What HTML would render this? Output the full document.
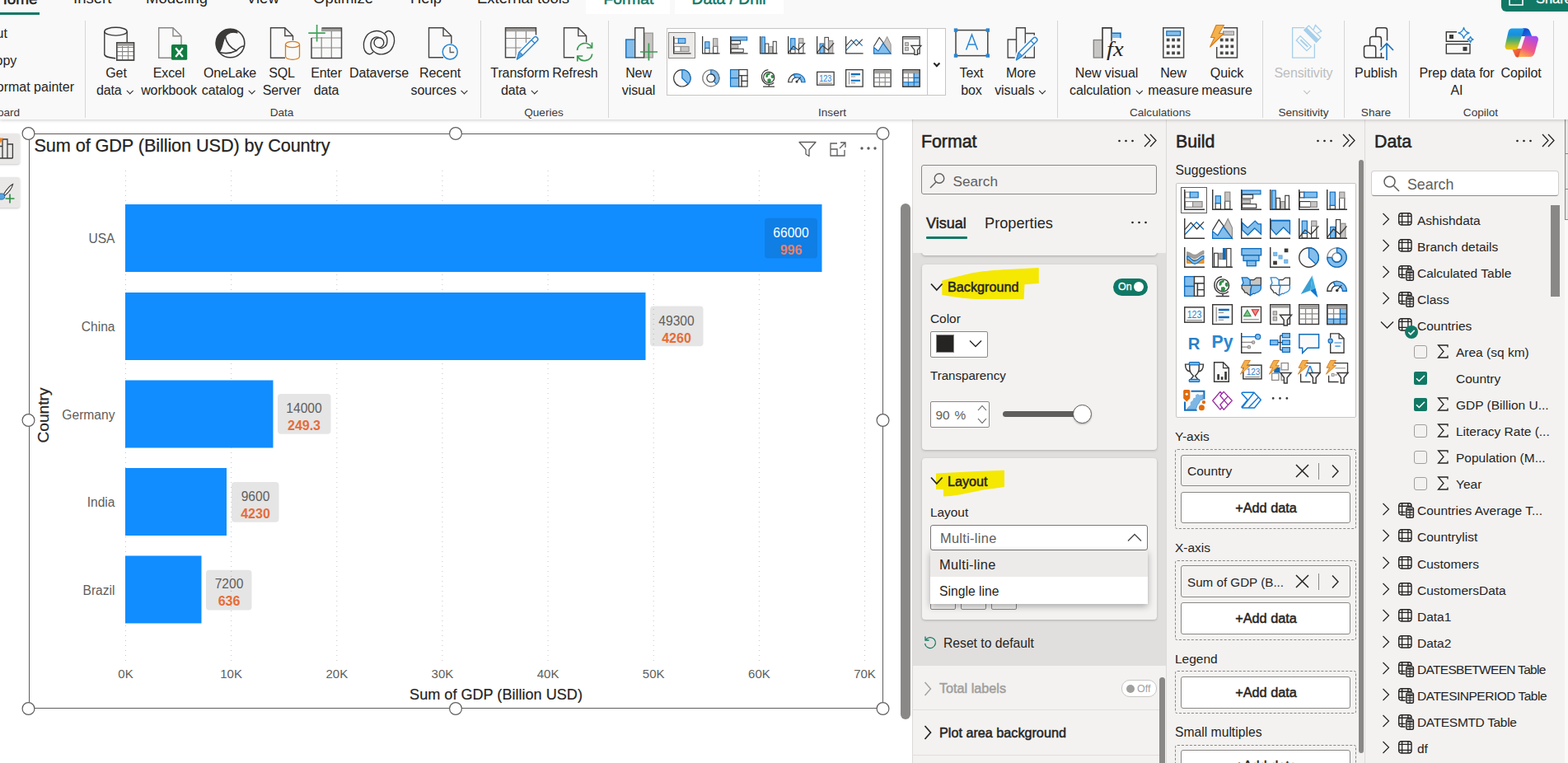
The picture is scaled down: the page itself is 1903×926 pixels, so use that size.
<!DOCTYPE html>
<html lang="en">
<head>
<meta charset="utf-8">
<title>Power BI Desktop</title>
<style>
*{box-sizing:border-box;margin:0;padding:0}
html,body{width:1903px;height:926px;overflow:hidden;background:#fff}
body{position:relative;font-family:"Liberation Sans",Arial,sans-serif;color:#252423;font-size:16px}
.abs{position:absolute}
.t{position:absolute;white-space:nowrap;line-height:1}
.c{transform:translateX(-50%)}
svg{position:absolute;overflow:visible}
#ribbon{z-index:5;position:absolute;left:0;top:0;width:1903px;height:144.500px;background:#f9f9f9;box-shadow:0 1px 4px rgba(0,0,0,.2)}
.sep{position:absolute;top:25px;width:1px;height:118px;background:#d6d6d6}
.rl{position:absolute;white-space:nowrap;line-height:1;font-size:16px;color:#252423;transform:translateX(-50%);letter-spacing:-.1px}
.gl{position:absolute;white-space:nowrap;line-height:1;font-size:13.6px;color:#3b3a39;transform:translateX(-50%);top:130px}
.tab{position:absolute;white-space:nowrap;line-height:1;font-size:18.500px;color:#252423;top:-11px}
.pane{position:absolute;top:144px;height:782px;background:#f3f2f1}
.ph{position:absolute;white-space:nowrap;line-height:1;font-size:21.300px;font-weight:400;color:#252423;top:161.500px;-webkit-text-stroke:.55px #252423}
.sb{font-weight:400;-webkit-text-stroke:.5px currentColor}
.din{font-family:"Liberation Sans",Arial,sans-serif}
.chev{display:inline-block;width:5.5px;height:5.5px;border-right:1.9px solid #252423;border-bottom:1.9px solid #252423;transform:rotate(45deg) translate(-.5px,-3.5px);margin-left:5px;margin-right:1px}
</style>
</head>
<body>
<div id="ribbon">
<!-- tabs -->
<div class="abs" style="left:711px;top:0;width:102px;height:17px;background:#fff"></div>
<div class="abs" style="left:819px;top:0;width:132px;height:17px;background:#fff"></div>
<div class="tab sb" style="left:-5px;font-size:19px">Home</div>
<div class="abs" style="left:0;top:14.600px;width:48px;height:3px;background:#117865"></div>
<div class="tab" style="left:89px">Insert</div>
<div class="tab" style="left:177px">Modeling</div>
<div class="tab" style="left:299px">View</div>
<div class="tab" style="left:380px">Optimize</div>
<div class="tab" style="left:498px">Help</div>
<div class="tab" style="left:579px">External tools</div>
<div class="tab sb" style="left:732.500px;font-size:19.200px;color:#117865">Format</div>
<div class="tab sb" style="left:839.500px;font-size:19.300px;color:#117865">Data / Drill</div>
<!-- share button -->
<div class="abs" style="left:1822px;top:-6px;width:90px;height:20.400px;background:#117865;border-radius:0 0 0 6px"></div>
<div class="t" style="left:1864px;top:-10.500px;font-size:16.400px;color:#fff;-webkit-text-stroke:.3px #fff">Share</div>
<svg style="left:1831px;top:-10px" width="22" height="18" viewBox="0 0 22 18"><path d="M1 3v13h16V9M8 10c1-5 5-7 9-7M13 0l4 3-4 3" fill="none" stroke="#fff" stroke-width="1.6"/></svg>
<!-- separators -->
<div class="sep" style="left:103px"></div>
<div class="sep" style="left:583px"></div>
<div class="sep" style="left:738px"></div>
<div class="sep" style="left:1283px"></div>
<div class="sep" style="left:1532px"></div>
<div class="sep" style="left:1631px"></div>
<div class="sep" style="left:1710px"></div>
<div class="sep" style="left:1885px"></div>
<!-- clipboard fragments -->
<div class="t" style="left:-16px;top:33px;font-size:16px">Cut</div>
<div class="t" style="left:-17px;top:66px;font-size:16px">Copy</div>
<div class="t" style="left:-14px;top:98px;font-size:16px">Format painter</div>
<div class="t" style="left:-34px;top:130px;font-size:13.6px;color:#3b3a39">Clipboard</div>
<!-- labels -->
<div class="rl" style="left:141px;top:81.200px">Get</div>
<div class="rl" style="left:138px;top:102px">data<span class="chev"></span></div>
<div class="rl" style="left:205px;top:81.200px">Excel</div>
<div class="rl" style="left:205px;top:102px">workbook</div>
<div class="rl" style="left:279px;top:81.200px">OneLake</div>
<div class="rl" style="left:276px;top:102px">catalog<span class="chev"></span></div>
<div class="rl" style="left:342px;top:81.200px">SQL</div>
<div class="rl" style="left:342px;top:102px">Server</div>
<div class="rl" style="left:396px;top:81.200px">Enter</div>
<div class="rl" style="left:396px;top:102px">data</div>
<div class="rl" style="left:460px;top:81.200px">Dataverse</div>
<div class="rl" style="left:534px;top:81.200px">Recent</div>
<div class="rl" style="left:532px;top:102px">sources<span class="chev"></span></div>
<div class="rl" style="left:631px;top:81.200px">Transform</div>
<div class="rl" style="left:629px;top:102px">data<span class="chev"></span></div>
<div class="rl" style="left:698px;top:81.200px">Refresh</div>
<div class="rl" style="left:775px;top:81.200px">New</div>
<div class="rl" style="left:775px;top:102px">visual</div>
<div class="rl" style="left:1179px;top:81.200px">Text</div>
<div class="rl" style="left:1179px;top:102px">box</div>
<div class="rl" style="left:1239px;top:81.200px">More</div>
<div class="rl" style="left:1237px;top:102px">visuals<span class="chev"></span></div>
<div class="rl" style="left:1343px;top:81.200px">New visual</div>
<div class="rl" style="left:1341px;top:102px">calculation<span class="chev"></span></div>
<div class="rl" style="left:1424px;top:81.200px">New</div>
<div class="rl" style="left:1424px;top:102px">measure</div>
<div class="rl" style="left:1489px;top:81.200px">Quick</div>
<div class="rl" style="left:1489px;top:102px">measure</div>
<div class="rl" style="left:1582px;top:81.200px;color:#bdbdbd">Sensitivity</div>
<div class="rl" style="left:1582px;top:102px;color:#bdbdbd"><span class="chev" style="border-color:#bdbdbd"></span></div>
<div class="rl" style="left:1670px;top:81.200px">Publish</div>
<div class="rl" style="left:1768px;top:81.200px">Prep data for</div>
<div class="rl" style="left:1768px;top:102px">AI</div>
<div class="rl" style="left:1846px;top:81.200px">Copilot</div>
<!-- group labels -->
<div class="gl" style="left:342px">Data</div>
<div class="gl" style="left:660px">Queries</div>
<div class="gl" style="left:1010px">Insert</div>
<div class="gl" style="left:1408px">Calculations</div>
<div class="gl" style="left:1582px">Sensitivity</div>
<div class="gl" style="left:1670px">Share</div>
<div class="gl" style="left:1797px">Copilot</div>
<!-- gallery -->
<div class="abs" style="left:808.500px;top:34px;width:339px;height:82px;background:#fff;border:1px solid #c8c6c4"></div>
<div class="abs" style="left:1125px;top:34px;width:1px;height:82px;background:#c8c6c4"></div>
<div class="abs" style="left:811px;top:39px;width:33px;height:32px;background:#edebe9;border:1px solid #8a8886"></div>
<span class="chev abs" style="left:1131.500px;top:76.500px;margin:0;border-width:2px"></span>
<!--ICONS-->
<svg style="left:816.9px;top:44.4px" width="21.6" height="21.6" viewBox="0 0 24 24"><rect x="1.4" y="3" width="5.6" height="6.5" fill="#fff" stroke="#8a8886" stroke-width="1.1"/><rect x="7" y="3" width="9.5" height="6.5" fill="#83beec" stroke="#0f6cbd" stroke-width="1.1"/><rect x="1.4" y="14" width="8.8" height="6.5" fill="#fff" stroke="#8a8886" stroke-width="1.1"/><rect x="10.2" y="14" width="11" height="6.5" fill="#c8c6c4" stroke="#8a8886" stroke-width="1.1"/><path d="M.7 0v23.300h23.300" fill="none" stroke="#3b3a39" stroke-width="1.4"/></svg>
<svg style="left:851.9px;top:44.4px" width="21.6" height="21.6" viewBox="0 0 24 24"><rect x="4" y="16" width="6" height="7" fill="#fff" stroke="#3b3a39" stroke-width="1.1"/><rect x="4" y="7.5" width="6" height="8.5" fill="#83beec" stroke="#0f6cbd" stroke-width="1.1"/><rect x="15" y="13.5" width="6" height="9.5" fill="#fff" stroke="#3b3a39" stroke-width="1.1"/><rect x="15" y="3" width="6" height="10.5" fill="#c8c6c4" stroke="#8a8886" stroke-width="1.1"/><path d="M.7 0v23.300h23.300" fill="none" stroke="#3b3a39" stroke-width="1.4"/></svg>
<svg style="left:886.3px;top:44.4px" width="21.6" height="21.6" viewBox="0 0 24 24"><rect x="1.4" y="1" width="21.6" height="4.5" fill="#83beec" stroke="#0f6cbd" stroke-width="1.1"/><rect x="1.4" y="6" width="12.6" height="4.5" fill="#fff" stroke="#3b3a39" stroke-width="1.1"/><rect x="1.4" y="12" width="9.6" height="4" fill="#c8c6c4" stroke="#8a8886" stroke-width="1.1"/><rect x="1.4" y="17" width="16.6" height="4.5" fill="#fff" stroke="#3b3a39" stroke-width="1.1"/><path d="M.7 0v23.300h23.300" fill="none" stroke="#3b3a39" stroke-width="1.4"/></svg>
<svg style="left:921.5px;top:44.4px" width="21.6" height="21.6" viewBox="0 0 24 24"><rect x="2.5" y="1" width="4.5" height="22" fill="#83beec" stroke="#0f6cbd" stroke-width="1.1"/><rect x="7.5" y="10" width="4.5" height="13" fill="#fff" stroke="#3b3a39" stroke-width="1.1"/><rect x="13" y="14" width="4.5" height="9" fill="#c8c6c4" stroke="#8a8886" stroke-width="1.1"/><rect x="18" y="7" width="4.5" height="16" fill="#fff" stroke="#3b3a39" stroke-width="1.1"/><path d="M.7 0v23.300h23.300" fill="none" stroke="#3b3a39" stroke-width="1.4"/></svg>
<svg style="left:956.1px;top:44.4px" width="21.6" height="21.6" viewBox="0 0 24 24"><rect x="4" y="17.5" width="6" height="5.5" fill="#fff" stroke="#3b3a39" stroke-width="1.1"/><rect x="4" y="3" width="6" height="14.5" fill="#83beec" stroke="#0f6cbd" stroke-width="1.1"/><rect x="15" y="9" width="6" height="14" fill="#fff" stroke="#3b3a39" stroke-width="1.1"/><rect x="15" y="3" width="6" height="6" fill="#c8c6c4" stroke="#8a8886" stroke-width="1.1"/><path d="M1 22l6.500-8.500 7 5L23.500 9" fill="none" stroke="#3b3a39" stroke-width="1.3"/><path d="M.7 0v23.300h23.300" fill="none" stroke="#3b3a39" stroke-width="1.4"/></svg>
<svg style="left:991.2px;top:44.4px" width="21.6" height="21.6" viewBox="0 0 24 24"><rect x="4.5" y="10" width="5.5" height="13" fill="#83beec" stroke="#0f6cbd" stroke-width="1.1"/><rect x="11" y="1.5" width="5" height="21.5" fill="#fff" stroke="#3b3a39" stroke-width="1.1"/><rect x="16.5" y="6" width="5.5" height="17" fill="#c8c6c4" stroke="#8a8886" stroke-width="1.1"/><path d="M1 22l7-9.500 7.500 6L23.500 9" fill="none" stroke="#3b3a39" stroke-width="1.3"/><path d="M.7 0v23.300h23.300" fill="none" stroke="#3b3a39" stroke-width="1.4"/></svg>
<svg style="left:1025.5px;top:44.4px" width="21.6" height="21.6" viewBox="0 0 24 24"><path d="M1 19L14.500 4.500L23 13" fill="none" stroke="#0f6cbd" stroke-width="1.2"/><path d="M1 13L8 5l7 7.500L23 4" fill="none" stroke="#3b3a39" stroke-width="1.2"/><path d="M.7 0v23.300h23.300" fill="none" stroke="#3b3a39" stroke-width="1.4"/></svg>
<svg style="left:1060.2px;top:44.4px" width="21.6" height="21.6" viewBox="0 0 24 24"><path d="M14 9.500L18.500 .500l5 10.500v12.500z" fill="#c8c6c4" stroke="#8a8886" stroke-width="1"/><path d="M.500 14L8 1.500l6 8" fill="#fafafa" stroke="#3b3a39" stroke-width="1.2"/><path d="M.600 15l6 5L13 9.500l10.500 14H.600z" fill="#83beec" stroke="#0f6cbd" stroke-width="1.2"/></svg>
<svg style="left:1095.2px;top:44.4px" width="21.6" height="21.6" viewBox="0 0 24 24"><rect x="0.7" y="0.7" width="22.8" height="22.8" fill="#fafafa" stroke="#3b3a39" stroke-width="1.4"/><path d="M1.400 3h21.500" fill="none" stroke="#a19f9d" stroke-width="3"/><rect x="4" y="8.5" width="4.2" height="4.2" fill="#c8c6c4" stroke="#8a8886" stroke-width="1"/><rect x="4" y="15" width="4.2" height="4.2" fill="#c8c6c4" stroke="#8a8886" stroke-width="1"/><path d="M12 12.700h13.500L20.500 18.500v6.500h-4v-6.500z" fill="#fafafa" stroke="#3b3a39" stroke-width="1.4" stroke-linejoin="miter"/></svg>
<svg style="left:816.9px;top:83.6px" width="21.6" height="21.6" viewBox="0 0 24 24"><circle cx="12" cy="12" r="11.300" fill="#fafafa" stroke="#3b3a39" stroke-width="1.300"/><path d="M12 12V.700A11.300 11.300 0 0 1 20.200 19.800z" fill="#83beec" stroke="#0f6cbd" stroke-width="1.3"/></svg>
<svg style="left:851.9px;top:83.6px" width="21.6" height="21.6" viewBox="0 0 24 24"><circle cx="12" cy="12" r="11.200" fill="#fafafa" stroke="#8a8886" stroke-width="1.200"/><path d="M12 .800A11.200 11.200 0 0 1 19.500 20.300l-3.700-4.300A5.500 5.500 0 0 0 12 6.500z" fill="#83beec" stroke="#0f6cbd" stroke-width="1.3"/><circle cx="12" cy="12" r="5.500" fill="none" stroke="#3b3a39" stroke-width="1.200"/><circle cx="12" cy="12" r="11.200" fill="none" stroke="#8a8886" stroke-width="1"/></svg>
<svg style="left:886.3px;top:83.6px" width="21.6" height="21.6" viewBox="0 0 24 24"><rect x="0.6" y="0.6" width="11.4" height="11.4" fill="#83beec" stroke="#0f6cbd" stroke-width="1.3"/><rect x="0.6" y="12" width="11.4" height="11.4" fill="#83beec" stroke="#0f6cbd" stroke-width="1.3"/><rect x="12" y="0.6" width="11.4" height="8" fill="#fff" stroke="#3b3a39" stroke-width="1.3"/><rect x="12" y="8.6" width="3.8" height="14.8" fill="#fff" stroke="#3b3a39" stroke-width="1.3"/><rect x="15.8" y="8.6" width="7.6" height="7.4" fill="#fff" stroke="#3b3a39" stroke-width="1.3"/><rect x="15.8" y="16" width="7.6" height="7.4" fill="#fff" stroke="#3b3a39" stroke-width="1.3"/></svg>
<svg style="left:921.5px;top:83.6px" width="21.6" height="21.6" viewBox="0 0 24 24"><circle cx="12.500" cy="11" r="7.300" fill="#fff" stroke="#3b3a39" stroke-width="1.300"/><path d="M9 6.500c2-1.500 4-2 5.500-1.500l-1 2.500-2 .500-.500 2.500-2.500 1c-.500-2-.500-3.500.500-5zM15.500 8l2.500-.500c1 1.500 1.200 3 .800 4.500l-2.300.500-1.500-2zM10.500 13l3.500-.500 1.500 2-1 3.500c-1.500.300-3 0-4-1z" fill="#2f8f46" stroke="none" stroke-width="0"/><path d="M11.500 .800C5.500 1.500 2.500 6 2.800 11.500 3.200 17 8 21 13.500 20.500c2-.200 4-1 5.500-2.500" fill="none" stroke="#3b3a39" stroke-width="1.4"/><path d="M12.500 20.500v3M4.500 23.500h15.500" fill="none" stroke="#3b3a39" stroke-width="1.4"/></svg>
<svg style="left:956.1px;top:83.6px" width="21.6" height="21.6" viewBox="0 0 24 24"><path d="M.800 17.500A11.300 11.300 0 0 1 12 6.200l0 4.800A6.500 6.500 0 0 0 5.600 17.500z" fill="#fafafa" stroke="#3b3a39" stroke-width="1.3"/><path d="M8 7A11.300 11.300 0 0 1 23.400 17.500h-4.800A6.500 6.500 0 0 0 10 11.500z" fill="#83beec" stroke="#0f6cbd" stroke-width="1.3"/><path d="M17.500 10.500L12 17" fill="none" stroke="#3b3a39" stroke-width="1.2"/><circle cx="12.200" cy="16.800" r="1.700" fill="#3b3a39"/></svg>
<svg style="left:991.2px;top:83.6px" width="21.6" height="21.6" viewBox="0 0 24 24"><rect x="0.7" y="3.7" width="22.8" height="17.6" fill="#fafafa" stroke="#3b3a39" stroke-width="1.4"/><path d="M3 19h18" fill="none" stroke="#8a8886" stroke-width="1.1"/><text x="12" y="16.500" text-anchor="middle" font-family="Liberation Sans,Arial,sans-serif" font-size="11.500" fill="#2a86d1" textLength="17" lengthAdjust="spacingAndGlyphs">123</text></svg>
<svg style="left:1025.5px;top:83.6px" width="21.6" height="21.6" viewBox="0 0 24 24"><rect x="0.7" y="0.7" width="22.8" height="22.8" fill="#fafafa" stroke="#3b3a39" stroke-width="1.4"/><path d="M5 3.500v17" fill="none" stroke="#8a8886" stroke-width="1.1"/><path d="M7.500 6.800h12.500M7.500 15.300h12.500" fill="none" stroke="#0f6cbd" stroke-width="2.4"/><path d="M7.500 10h6M7.500 18.500h6" fill="none" stroke="#8a8886" stroke-width="1"/></svg>
<svg style="left:1060.2px;top:83.6px" width="21.6" height="21.6" viewBox="0 0 24 24"><rect x="0.7" y="0.7" width="22.8" height="22.8" fill="#fafafa" stroke="#3b3a39" stroke-width="1.4"/><path d="M1.400 3h21.500" fill="none" stroke="#a19f9d" stroke-width="3"/><path d="M8.200 5v18M15.800 5v18M1.400 11.500h21.500M1.400 17.500h21.500M1.400 5.200h21.500" fill="none" stroke="#8a8886" stroke-width="1.2"/></svg>
<svg style="left:1095.2px;top:83.6px" width="21.6" height="21.6" viewBox="0 0 24 24"><rect x="0.7" y="0.7" width="22.8" height="22.8" fill="#fafafa" stroke="#3b3a39" stroke-width="1.4"/><path d="M1.400 3h21.500" fill="none" stroke="#a19f9d" stroke-width="3"/><rect x="15.8" y="5.2" width="7" height="12.3" fill="#83beec" stroke="#0f6cbd" stroke-width="0"/><rect x="1.4" y="17.5" width="21.4" height="5.3" fill="#83beec" stroke="#0f6cbd" stroke-width="0"/><path d="M8.200 5v12.500M15.800 5v12.500M1.400 11.500h14.400M1.400 5.200h21.500" fill="none" stroke="#8a8886" stroke-width="1.2"/><path d="M8.200 17.500v5.500M15.800 17.500v5.500M15.800 11.500h7M1.400 17.500h21.500M15.800 5.200v12.300" fill="none" stroke="#0f6cbd" stroke-width="1.2"/><rect x="0.7" y="0.7" width="22.8" height="22.8" fill="none" stroke="#3b3a39" stroke-width="1.4"/></svg>
<svg style="left:0;top:0" width="1903" height="144" viewBox="0 0 1903 144" fill="none" stroke-width="1.400">
<!-- Get data -->
<g stroke="#3b3a39">
<ellipse cx="140.500" cy="38.200" rx="13.700" ry="4.900"/>
<path d="M126.800 38.200v27.500c0 2.500 5.500 4.600 13.500 5M154.200 38.200v13"/>
<rect x="141.700" y="51.700" width="20.800" height="21.300" fill="#fff" stroke="#484644"/>
<path d="M142.400 54.200h19.400" stroke="#a19f9d" stroke-width="3.200"/>
<path d="M148.600 56v16.500M155.500 56v16.500M142 57.500h20M142 62.600h20M142 67.700h20" stroke="#8a8886" stroke-width="1.100"/>
<rect x="141.700" y="51.700" width="20.800" height="21.300" stroke="#484644"/>
</g>
<!-- Excel -->
<path d="M208 70.300h-15.300v-36.500h17.300l10 10v10.500M210 33.800v10h10" stroke="#8a8886"/>
<rect x="208" y="54" width="19.200" height="18.800" rx="1.500" fill="#107c41" stroke="none"/>
<path d="M213.200 58.200l8.600 10.800M221.800 58.200l-8.600 10.800" stroke="#fff" stroke-width="2.300"/>
<!-- OneLake -->
<g stroke="#3b3a39">
<circle cx="279.500" cy="52.500" r="17.300" stroke-width="1.600"/>
<path d="M287.500 37.200A17.300 17.300 0 0 0 266 63.300C271.500 57 269.500 46 276 41.500c3.500-2.500 8-3 12-1.500z" fill="#3b3a39" stroke-width="1.200" stroke-linejoin="round"/>
<path d="M273 43c1.500 8.500 6 15 14 18.500 3-3.500 6-5.800 9.800-5.500M266.500 63.500c7 2 14.500 1 20.500-2" stroke-width="1.500"/>
</g>
<!-- SQL -->
<path d="M346 70.300h-17.500v-36.500h17.300l9.700 9.700v5.500M345.800 33.800v9.700h9.700" stroke="#484644"/>
<g stroke="#d47b1e" stroke-width="1.300">
<path d="M346.500 54v14.500c0 2.200 3.800 3.800 8.500 3.800s8.500-1.600 8.500-3.800V54" fill="#f9f9f9"/>
<ellipse cx="355" cy="54" rx="8.500" ry="3.600" fill="#f9f9f9"/>
</g>
<!-- Enter data -->
<path d="M390 36.200h24" stroke="#a19f9d" stroke-width="4"/>
<path d="M390.200 45v25M402.300 38v32M378 46h36M378 58h36" stroke="#8a8886" stroke-width="1.200"/>
<path d="M378 46v24.500h36.500v-36.600h-24" stroke="#484644" stroke-width="1.500"/>
<path d="M384.600 30v20.500M374.300 40.200h20.500" stroke="#41a35a" stroke-width="1.700"/>
<!-- Dataverse -->
<g stroke="#3b3a39" stroke-width="1.400">
<circle cx="459.900" cy="51.700" r="5.900"/>
<path d="M453.100 63.100C452.300 63.600 449.900 66.100 448.200 65.800C446.400 65.500 443.800 63.300 442.700 61.300C441.600 59.300 441.300 55.900 441.400 53.600C441.400 51.200 442.100 49.200 442.900 47.200C443.800 45.300 445 43.200 446.300 41.800C447.700 40.400 449.100 39.600 450.900 38.800C452.600 38.100 454.900 37.600 456.800 37.500C458.700 37.400 460.600 37.800 462.200 38.400C463.900 39 465.600 40.200 466.800 41.300C467.900 42.400 468.700 43.700 469.300 45C469.800 46.300 469.900 47.600 469.900 49.100C469.900 50.500 469.800 52.300 469.300 53.600C468.700 54.900 467.800 56 466.800 56.800C465.700 57.600 464.300 58.300 463.100 58.500C461.900 58.600 460.100 57.800 459.500 57.700"/>
<path d="M466.800 40.300C467.600 39.800 470 37.200 471.800 37.500C473.500 37.800 476.100 40 477.200 42.100C478.300 44.100 478.600 47.400 478.600 49.800C478.500 52.100 477.800 54.200 477 56.100C476.100 58.100 474.900 60.200 473.600 61.600C472.200 63 470.800 63.800 469 64.500C467.300 65.200 465 65.800 463.100 65.900C461.200 66 459.300 65.600 457.700 65C456 64.300 454.300 63.100 453.100 62C452 60.900 451.200 59.700 450.700 58.400C450.100 57.100 450 55.800 450 54.300C450 52.900 450.100 51.100 450.700 49.800C451.200 48.500 452.100 47.400 453.100 46.600C454.200 45.800 455.600 45 456.800 44.900C458 44.700 459.800 45.600 460.400 45.700"/>
</g>
<!-- Recent sources -->
<path d="M538 69.800h-17.500v-36h17.500l9.800 9.800v9.500M538 33.800v9.800h9.800" stroke="#484644"/>
<circle cx="546.200" cy="63" r="9" fill="#f9f9f9" stroke="#2a86d1" stroke-width="1.500"/>
<path d="M546.200 57v6.500h5" stroke="#605e5c" stroke-width="1.300"/>
<!-- Transform data -->
<path d="M614 36.200h36" stroke="#a19f9d" stroke-width="4"/>
<path d="M626 38v32M638.500 38v14M614 46.500h36M614 58h24" stroke="#8a8886" stroke-width="1.200"/>
<path d="M629 69.800h-15.500v-36h37v13" stroke="#484644" stroke-width="1.500"/>
<path d="M627.500 72l2.500-8.500 18.500-18.500c2-1.500 5.500 1.500 4 4L634 67.500z" fill="#f9f9f9" stroke="#f9f9f9" stroke-width="4.500" stroke-linejoin="round"/><path d="M627.500 72l2.500-8.500 18.500-18.500c2-1.500 5.500 1.500 4 4L634 67.500z" fill="#f9f9f9" stroke="#2a86d1" stroke-width="1.500" stroke-linejoin="round"/>
<path d="M627.500 72l2.500-8.500c2 0 4 2 4 4z" fill="#5ba3dc" stroke="#2a86d1" stroke-width="1"/>
<path d="M645 48.500l4.500 4.500" stroke="#2a86d1" stroke-width="1.300"/>
<!-- Refresh -->
<path d="M697 69.800h-12.500v-36h17.300l9.800 9.800v8M701.800 33.800v9.800h9.800" stroke="#484644"/>
<g stroke="#3a9a50" stroke-width="1.700">
<path d="M700.500 61a9.300 9.300 0 0 1 17.500-3.500M718.700 65.500a9.300 9.300 0 0 1-17.500 3"/>
<path d="M718.500 51.500v6.500h-6.500M700.800 74.500v-6.500h6.500"/>
</g>
<!-- New visual -->
<rect x="782" y="40.200" width="10.300" height="29.700" fill="#c8c6c4" stroke="#a19f9d"/>
<rect x="759.700" y="48" width="11" height="21.900" fill="#83beec" stroke="#1a6fb8"/>
<rect x="770.700" y="33.800" width="10.800" height="36.100" fill="#f9f9f9" stroke="#484644"/>
<path d="M787.400 52.500v21M777 63h21" stroke="#3a9a50" stroke-width="1.700"/>
<!-- Text box -->
<rect x="1160" y="36.600" width="38.800" height="31" stroke="#484644" stroke-width="1.500"/>
<g fill="#2a86d1" stroke="none"><rect x="1157.800" y="34.400" width="4.400" height="4.400"/><rect x="1196.600" y="34.400" width="4.400" height="4.400"/><rect x="1157.800" y="65.400" width="4.400" height="4.400"/><rect x="1196.600" y="65.400" width="4.400" height="4.400"/></g>
<path d="M1172.500 60.500l7-18.500 7 18.500M1175 54h9" stroke="#2a86d1" stroke-width="1.500"/>
<!-- More visuals -->
<path d="M1223.200 48h10.300v22h-10.300zM1233.500 48V33.800h10.800V70h-10.800M1244.300 40.500h11V70h-11" stroke="#484644"/>
<path d="M1233.500 72.800l2.500-8.500 18.500-18.500c2-1.500 5.500 1.500 4 4L1240 68.300z" fill="#f9f9f9" stroke="#f9f9f9" stroke-width="5" stroke-linejoin="round"/>
<path d="M1233.500 72.800l2.500-8.500 18.500-18.500c2-1.500 5.500 1.500 4 4L1240 68.300z" fill="#f9f9f9" stroke="#2a86d1" stroke-width="1.500" stroke-linejoin="round"/>
<path d="M1233.500 72.800l2.500-8.500c2 0 4 2 4 4z" fill="#5ba3dc" stroke="#2a86d1" stroke-width="1"/>
<path d="M1251 49.300l4.500 4.500" stroke="#2a86d1" stroke-width="1.300"/>
<!-- New visual calculation -->
<rect x="1327.300" y="48.500" width="10.500" height="21.500" fill="#c8c6c4" stroke="#807e7c" stroke-width="1.300"/>
<path d="M1338 70.500V33.900h11V52" stroke="#3b3a39" stroke-width="1.600" fill="#fafafa"/>
<path d="M1349.800 46v-5.800h9.400v5.800" fill="#83beec" stroke="none"/>
<path d="M1349.300 40.200h10.600v6" stroke="#0f6cbd" stroke-width="1.500"/>
<!-- New measure -->
<rect x="1411.800" y="33.800" width="24.800" height="36.200" stroke="#484644" stroke-width="1.500" fill="#f9f9f9"/>
<rect x="1415.800" y="37.800" width="16.800" height="5.400" fill="#83beec" stroke="#1a6fb8" stroke-width="1.200"/>
<g fill="#484644" stroke="none">
<rect x="1415.800" y="46.600" width="3.700" height="3.700"/><rect x="1422.200" y="46.600" width="3.700" height="3.700"/><rect x="1428.500" y="46.600" width="3.700" height="3.700"/>
<rect x="1415.800" y="54.500" width="3.700" height="3.700"/><rect x="1422.200" y="54.500" width="3.700" height="3.700"/><rect x="1428.500" y="54.500" width="3.700" height="3.700"/>
<rect x="1415.800" y="62.500" width="3.700" height="3.700"/><rect x="1422.200" y="62.500" width="3.700" height="3.700"/><rect x="1428.500" y="62.500" width="3.700" height="3.700"/>
</g>
<!-- Quick measure -->
<path d="M1485 33.800h16.500V70h-24.800V57" stroke="#484644" stroke-width="1.500"/>
<rect x="1484.500" y="38" width="13" height="4.600" fill="#c8c6c4" stroke="#8a8886" stroke-width="1"/>
<g fill="#484644" stroke="none">
<rect x="1480.800" y="46.600" width="3.700" height="3.700"/><rect x="1487.200" y="46.600" width="3.700" height="3.700"/><rect x="1493.500" y="46.600" width="3.700" height="3.700"/>
<rect x="1480.800" y="54.500" width="3.700" height="3.700"/><rect x="1487.200" y="54.500" width="3.700" height="3.700"/><rect x="1493.500" y="54.500" width="3.700" height="3.700"/>
<rect x="1480.800" y="62.500" width="3.700" height="3.700"/><rect x="1487.200" y="62.500" width="3.700" height="3.700"/><rect x="1493.500" y="62.500" width="3.700" height="3.700"/>
</g>
<path d="M1476 30.500h9.500l-6 10h6L1468.500 57l5.500-11.500h-4.500z" fill="#f3b04c" stroke="#d47b1e" stroke-width="1.100" stroke-linejoin="round"/>
<!-- Sensitivity -->
<g stroke="#a6cfea" stroke-width="1.300">
<path d="M1583.300 33.700h-14.700v36.500h26.800V53.300"/>
<path d="M1578.200 43.600l13.100 12.900-5.400 5.100-12.600-12.600z"/>
<path d="M1578.300 48.300l9 8.600" stroke-width="2"/>
<g transform="translate(1592.900 41.100) rotate(45)">
<rect x="-10.200" y="-3.850" width="20.400" height="7.700" fill="#f9f9f9"/>
<rect x="-10.200" y="0" width="20.400" height="3.850" fill="#a6cfea"/>
<path d="M-2.600 -4.400L-5 -10H5.300L3.500 -4.400" fill="#f9f9f9"/>
</g>
</g>
<!-- Publish -->
<g stroke="#3b3a39" stroke-width="1.500">
<path d="M1669.800 44.500v-8a2.700 2.700 0 0 1 2.700-2.700h8.300a2.700 2.700 0 0 1 2.700 2.700v13"/>
<path d="M1662.600 55.400v-8.200a2.700 2.700 0 0 1 2.700-2.700h8.400a2.700 2.700 0 0 1 2.700 2.700v10M1676.400 64v6"/>
<path d="M1680 70h-21.800a2.700 2.700 0 0 1-2.700-2.700v-9.200a2.700 2.700 0 0 1 2.700-2.700h8.800a2.700 2.700 0 0 1 2.700 2.700V70"/>
</g>
<path d="M1683 73V53M1675 61l8-8.300 8 8.300" stroke="#1a6fb8" stroke-width="1.600"/>
<!-- Prep data -->
<g stroke="#3b3a39" stroke-width="1.400">
<path d="M1768 38.800h-12.700v11.400h27"/>
<rect x="1755.300" y="53.600" width="28.700" height="11.400"/>
</g>
<rect x="1759" y="42" width="5" height="5" fill="#3b3a39"/><rect x="1775.500" y="56.800" width="5" height="5" fill="#3b3a39"/>
<path d="M1776.500 33.300c.800 4 2.500 5.800 6.500 6.700-4 .900-5.700 2.700-6.500 6.700-.800-4-2.500-5.800-6.500-6.700 4-.900 5.700-2.700 6.500-6.700zM1784.600 44.300c.500 2.200 1.500 3.200 3.500 3.600-2 .400-3 1.400-3.500 3.600-.500-2.200-1.500-3.200-3.500-3.600 2-.400 3-1.400 3.500-3.600z" stroke="#2a86d1" stroke-width="1.300" stroke-linejoin="round"/>
</svg>
<!-- fx text + Copilot logo -->
<div class="t" style="left:1342.500px;top:46.500px;font-family:'Liberation Serif',serif;font-style:italic;font-size:25.500px;color:#252423;letter-spacing:0;transform:scaleX(1.12);transform-origin:0 0;text-shadow:0 0 2px #f9f9f9,0 0 2px #f9f9f9,0 0 3px #f9f9f9">fx</div>
<svg style="left:1816px;top:25px" width="60" height="53" viewBox="0 0 60 53">
<defs>
<linearGradient id="cg1" x1="0" y1="0" x2="0" y2="1"><stop offset="0" stop-color="#1b9df0"/><stop offset=".3" stop-color="#1a8fd8"/><stop offset=".55" stop-color="#4cae6c"/><stop offset=".8" stop-color="#b8c030"/><stop offset="1" stop-color="#f5c80a"/></linearGradient>
<linearGradient id="cg2" x1=".7" y1="0" x2=".3" y2="1"><stop offset="0" stop-color="#a44cf0"/><stop offset=".35" stop-color="#d650b4"/><stop offset=".65" stop-color="#f25c84"/><stop offset="1" stop-color="#fda848"/></linearGradient>
<linearGradient id="cg3" x1="0" y1="0" x2="1" y2="1"><stop offset="0" stop-color="#1238c8"/><stop offset="1" stop-color="#1a7be8"/></linearGradient>
<linearGradient id="cg4" x1="0" y1="0" x2="1" y2="1"><stop offset="0" stop-color="#fb7a3c"/><stop offset="1" stop-color="#dc3c2c"/></linearGradient>
</defs>
<path d="M32 9.600c5-1 8 0 9 4l2.200 5.500H30z" fill="url(#cg3)"/>
<path d="M19 34h12.500l-3.500 9.500c-1 1.500-4 1.300-5-.500z" fill="url(#cg4)"/>
<path d="M19 9.400h15l-8 23.500c-.700 1.700-1.800 2.300-3.500 2.300H15c-3.500 0-5-2-4.200-5.500l3.700-16C15.300 10.500 16.800 9.400 19 9.400z" fill="url(#cg1)"/>
<path d="M36 18.800h10.500c3.500 0 5 2 4.200 5.500l-4.200 15c-1 3.200-2.700 4.800-5.500 4.800H27l8-25.300z" fill="url(#cg2)"/>
</svg>
</div>
<!-- canvas -->
<div class="abs" style="left:0;top:144px;width:1107px;height:782px;background:#fff"></div>
<!-- left floating buttons -->
<div class="abs" style="left:-4px;top:162px;width:27.500px;height:36.500px;background:#eae8e7;border-radius:3px;box-shadow:0 1px 2.500px rgba(0,0,0,.22)"></div>
<div class="abs" style="left:-4px;top:215px;width:27.500px;height:37px;background:#eae8e7;border-radius:3px;box-shadow:0 1px 2.500px rgba(0,0,0,.22)"></div>
<svg style="left:0;top:150px" width="24" height="110" viewBox="0 0 24 110"><path d="M3 42V19h6v23M9 25h6.400v17M-2 27.500h5M-2 42h17.400" fill="none" stroke="#3b3a39" stroke-width="1.300"/><path d="M-1 17.500h5L.500 24z" fill="#e8852a"/><path d="M15.600 73.600c-3 1.500-8 7-11 12l1.500 1.500c4-3.500 8.500-9 9.500-13.500z" fill="#fff" stroke="#3b3a39" stroke-width="1.100"/><ellipse cx="1.500" cy="88.500" rx="4.200" ry="3.600" fill="#5ba3dc" stroke="#1a6fb8" stroke-width="1"/><path d="M12 85.500v11M6.500 91h11" stroke="#2f8f46" stroke-width="1.700" fill="none"/></svg>
<!-- visual -->
<div id="visual" class="abs" style="left:35px;top:162px;width:1037px;height:698px;border:1px solid #605e5c;background:#fff"></div>
<div class="t din" style="left:41.500px;top:165.500px;font-size:21.700px;color:#252423;letter-spacing:-.1px;-webkit-text-stroke:.25px #252423">Sum of GDP (Billion USD) by Country</div>
<!-- header icons -->
<svg style="left:969px;top:171px" width="22" height="20" viewBox="0 0 22 20"><path d="M1 1.500h20l-8 9v8l-4-2.500v-5.500z" fill="none" stroke="#605e5c" stroke-width="1.3" stroke-linejoin="round"/></svg>
<svg style="left:1007px;top:172px" width="20" height="18" viewBox="0 0 20 18"><path d="M9 2H1v15h17v-7M1 9h8v8M12 8l7-7M13 1h6v6" fill="none" stroke="#605e5c" stroke-width="1.3"/></svg>
<svg style="left:1043px;top:177px" width="22" height="6" viewBox="0 0 22 6"><circle cx="3" cy="3" r="1.700" fill="#605e5c"/><circle cx="11" cy="3" r="1.700" fill="#605e5c"/><circle cx="19" cy="3" r="1.700" fill="#605e5c"/></svg>
<!-- gridlines -->
<svg style="left:0;top:0" width="1107" height="926" viewBox="0 0 1107 926">
<g stroke="#c8c6c4" stroke-width="1" stroke-dasharray="1 5" fill="none">
<path d="M152.500 207v597M280.600 207v597M408.800 207v597M536.900 207v597M665.100 207v597M793.200 207v597M921.400 207v597M1049.500 207v597"/>
</g>
<g fill="#118dff">
<rect x="152" y="248" width="845.500" height="82"/>
<rect x="152" y="355" width="631.500" height="82"/>
<rect x="152" y="461.500" width="179.500" height="82"/>
<rect x="152" y="568" width="123" height="82"/>
<rect x="152" y="674.500" width="92.500" height="82"/>
</g>
<g fill="rgba(0,0,0,.1)">
<rect x="928" y="264.800" width="64" height="48.700" rx="4"/>
<rect x="789" y="371.500" width="64.500" height="48.700" rx="4"/>
<rect x="337" y="478" width="64.500" height="48.700" rx="4"/>
<rect x="281" y="585" width="57.500" height="48.700" rx="4"/>
<rect x="250" y="691.700" width="55.500" height="48.700" rx="4"/>
</g>
</svg>
<!-- category labels -->
<div class="t" style="right:1763.500px;top:282px;font-size:15.600px;color:#605e5c">USA</div>
<div class="t" style="right:1763.500px;top:388.500px;font-size:15.600px;color:#605e5c">China</div>
<div class="t" style="right:1763.500px;top:495.500px;font-size:15.600px;color:#605e5c">Germany</div>
<div class="t" style="right:1763.500px;top:602px;font-size:15.600px;color:#605e5c">India</div>
<div class="t" style="right:1763.500px;top:708.500px;font-size:15.600px;color:#605e5c">Brazil</div>
<!-- data labels -->
<div class="t c" style="left:960px;top:275px;font-size:15.6px;color:#fff">66000</div>
<div class="t c" style="left:960px;top:296px;font-size:16px;color:#ee7f63;font-weight:700">996</div>
<div class="t c" style="left:821px;top:382px;font-size:15.6px;color:#605e5c">49300</div>
<div class="t c" style="left:821px;top:403px;font-size:16px;color:#e66c37;font-weight:700">4260</div>
<div class="t c" style="left:369px;top:488px;font-size:15.6px;color:#605e5c">14000</div>
<div class="t c" style="left:369px;top:509px;font-size:16px;color:#e66c37;font-weight:700">249.3</div>
<div class="t c" style="left:310px;top:595px;font-size:15.6px;color:#605e5c">9600</div>
<div class="t c" style="left:310px;top:616px;font-size:16px;color:#e66c37;font-weight:700">4230</div>
<div class="t c" style="left:278px;top:701px;font-size:15.6px;color:#605e5c">7200</div>
<div class="t c" style="left:278px;top:722px;font-size:16px;color:#e66c37;font-weight:700">636</div>
<!-- x axis labels -->
<div class="t c" style="left:152.500px;top:810px;font-size:15px;color:#605e5c">0K</div>
<div class="t c" style="left:280.600px;top:810px;font-size:15px;color:#605e5c">10K</div>
<div class="t c" style="left:408.800px;top:810px;font-size:15px;color:#605e5c">20K</div>
<div class="t c" style="left:536.900px;top:810px;font-size:15px;color:#605e5c">30K</div>
<div class="t c" style="left:665.100px;top:810px;font-size:15px;color:#605e5c">40K</div>
<div class="t c" style="left:793.200px;top:810px;font-size:15px;color:#605e5c">50K</div>
<div class="t c" style="left:921.400px;top:810px;font-size:15px;color:#605e5c">60K</div>
<div class="t c" style="left:1049.500px;top:810px;font-size:15px;color:#605e5c">70K</div>
<div class="t c din" style="left:602px;top:834px;font-size:18.100px;color:#252423;-webkit-text-stroke:.2px #252423">Sum of GDP (Billion USD)</div>
<div class="t din" style="left:52.500px;top:503.500px;font-size:19.200px;color:#252423;-webkit-text-stroke:.25px #252423;transform:translate(-50%,-50%) rotate(-90deg)">Country</div>
<!-- handles -->
<svg style="left:0;top:0" width="1107" height="926" viewBox="0 0 1107 926">
<g fill="#fff" stroke="#605e5c" stroke-width="1.2">
<circle cx="34.500" cy="162" r="7.400"/><circle cx="553" cy="162" r="7.400"/><circle cx="1071.500" cy="162" r="7.400"/>
<circle cx="34.500" cy="510" r="7.400"/><circle cx="1071.500" cy="510" r="7.400"/>
<circle cx="34.500" cy="860" r="7.400"/><circle cx="553" cy="860" r="7.400"/><circle cx="1071.500" cy="860" r="7.400"/>
</g>
</svg>
<!-- canvas scrollbar -->
<div class="abs" style="left:1093px;top:247px;width:11.500px;height:626px;background:#8a8886;border-radius:6px"></div>
<!-- FORMAT PANE -->
<div class="abs" style="left:1107px;top:144px;width:1px;height:782px;background:#dcdad8"></div>
<div class="pane" style="left:1108px;width:307px"></div>
<div class="ph" style="left:1118px">Format</div>
<svg style="left:1356px;top:168px" width="22" height="6" viewBox="0 0 22 6"><circle cx="2.500" cy="3" r="1.300" fill="#252423"/><circle cx="10.500" cy="3" r="1.300" fill="#252423"/><circle cx="18.500" cy="3" r="1.300" fill="#252423"/></svg>
<svg style="left:1387.500px;top:161.500px" width="16" height="17" viewBox="0 0 16 17"><path d="M1 1l7 7.500-7 7.500M8 1l7 7.500-7 7.500" fill="none" stroke="#252423" stroke-width="1.300"/></svg>
<div class="abs" style="left:1118px;top:200px;width:286px;height:36px;border:1px solid #8a8886;border-radius:3px;background:#f3f2f1"></div>
<svg style="left:1128px;top:209px" width="20" height="20" viewBox="0 0 20 20"><circle cx="12" cy="7.500" r="5.800" fill="none" stroke="#605e5c" stroke-width="1.400"/><path d="M8 12L1 19" stroke="#605e5c" stroke-width="1.400"/></svg>
<div class="t" style="left:1156.500px;top:211.500px;font-size:17.200px;color:#605e5c">Search</div>
<div class="t sb" style="left:1124px;top:262px;font-size:18px">Visual</div>
<div class="abs" style="left:1124px;top:287px;width:50px;height:2.500px;background:#117865;border-radius:1px"></div>
<div class="t" style="left:1195px;top:262px;font-size:18.200px">Properties</div>
<svg style="left:1372px;top:267px" width="22" height="6" viewBox="0 0 22 6"><circle cx="2.500" cy="3" r="1.300" fill="#252423"/><circle cx="10.500" cy="3" r="1.300" fill="#252423"/><circle cx="18.500" cy="3" r="1.300" fill="#252423"/></svg>
<!-- card area -->
<div class="abs" style="left:1108px;top:307px;width:307px;height:501px;background:#e1dfdd;overflow:hidden">
 <div class="abs" style="left:11px;top:-10px;width:285px;height:13px;background:#f3f2f1;border-radius:4px;box-shadow:0 1px 3px rgba(0,0,0,.25)"></div>
 <div class="abs" style="left:11px;top:14px;width:285px;height:225px;background:#f3f2f1;border-radius:4px;box-shadow:0 1px 3px rgba(0,0,0,.22)"></div>
 <div class="abs" style="left:11px;top:249px;width:285px;height:196px;background:#f3f2f1;border-radius:4px;box-shadow:0 1px 3px rgba(0,0,0,.22)"></div>
</div>
<!-- Background card content -->
<svg style="left:0;top:0" width="1903" height="926" viewBox="0 0 1903 926"><path d="M1143.300 340.600C1150 339 1170 333.500 1181.300 331.100C1196 328.500 1215 327.300 1228 326.800L1260.800 325.100V344.100L1243.500 345.300L1242.600 363.100L1184.800 363.100C1170 362.500 1155 359.500 1143.300 357.900z" fill="#f5e803"/><path d="M1136 574.600L1184.800 572L1219 570.800V591C1210 592.500 1200 593.500 1193.400 594.400C1183 596.500 1172 599 1164 600.500C1157 601.700 1150 602.300 1145 602.600V593.900H1136z" fill="#f5e803"/></svg>
<svg style="left:1129px;top:342.500px" width="16" height="11" viewBox="0 0 16 11"><path d="M1 1.500l6.800 7.500 6.800-7.500" fill="none" stroke="#252423" stroke-width="1.800"/></svg>
<div class="t sb" style="left:1150px;top:340px;font-size:16.200px">Background</div>
<div class="abs" style="left:1350.500px;top:337.500px;width:42.500px;height:21px;background:#117865;border-radius:10.500px"></div>
<div class="t" style="left:1357px;top:342px;font-size:12.500px;color:#fff;-webkit-text-stroke:.3px #fff">On</div>
<div class="abs" style="left:1375.800px;top:342px;width:12px;height:12px;background:#fff;border-radius:50%"></div>
<div class="t" style="left:1129px;top:379px;font-size:15.400px">Color</div>
<div class="abs" style="left:1129px;top:401.500px;width:70px;height:32px;background:#fff;border:1px solid #8a8886;border-radius:2px"></div>
<div class="abs" style="left:1136px;top:406px;width:22px;height:22px;background:#252423;border:1px solid #8a8886"></div>
<svg style="left:1176px;top:412px" width="16" height="10" viewBox="0 0 16 10"><path d="M1 1.500l7 7 7-7" fill="none" stroke="#252423" stroke-width="1.300"/></svg>
<div class="t" style="left:1129px;top:448px;font-size:15.100px">Transparency</div>
<div class="abs" style="left:1129px;top:487px;width:72px;height:32px;background:#fff;border:1px solid #8a8886;border-radius:2px"></div>
<div class="t" style="left:1135.500px;top:495.500px;font-size:15.400px;word-spacing:1.500px;color:#605e5c">90 %</div>
<svg style="left:1186px;top:490px" width="12" height="26" viewBox="0 0 12 26"><path d="M1 8l5-5.500 5 5.500M1 18l5 5.500 5-5.500" fill="none" stroke="#605e5c" stroke-width="1.100"/></svg>
<div class="abs" style="left:1217px;top:498.500px;width:100px;height:7.500px;background:#605e5c;border-radius:4px"></div>
<div class="abs" style="left:1302px;top:491px;width:23px;height:23px;background:#fff;border:1.700px solid #605e5c;border-radius:50%;box-shadow:0 1px 2px rgba(0,0,0,.25)"></div>
<!-- Layout card content -->

<svg style="left:1129px;top:577.500px" width="16" height="11" viewBox="0 0 16 11"><path d="M1 1.500l6.800 7.500 6.800-7.500" fill="none" stroke="#252423" stroke-width="1.800"/></svg>
<div class="t sb" style="left:1150px;top:575.500px;font-size:16.200px">Layout</div>
<div class="t" style="left:1129px;top:614px;font-size:15.400px">Layout</div>
<!-- hidden small buttons behind list -->
<div class="abs" style="left:1129px;top:720px;width:31px;height:20px;border:1px solid #8a8886;border-radius:2px"></div>
<div class="abs" style="left:1166px;top:720px;width:31px;height:20px;border:1px solid #8a8886;border-radius:2px"></div>
<div class="abs" style="left:1203px;top:720px;width:31px;height:20px;border:1px solid #8a8886;border-radius:2px"></div>
<div class="abs" style="left:1129px;top:637px;width:264px;height:31px;background:#fff;border:1px solid #7a7876;border-radius:3px"></div>
<div class="t" style="left:1141px;top:645px;font-size:16.400px;letter-spacing:.3px;color:#605e5c">Multi-line</div>
<svg style="left:1368px;top:647px" width="18" height="11" viewBox="0 0 18 11"><path d="M1 9.500l8-8 8 8" fill="none" stroke="#484644" stroke-width="1.300"/></svg>
<div class="abs" style="left:1129px;top:668px;width:264px;height:65px;background:#fff;box-shadow:0 3px 8px rgba(0,0,0,.3)"></div>
<div class="abs" style="left:1129px;top:668px;width:264px;height:32px;background:#edebe9"></div>
<div class="t" style="left:1140px;top:677px;font-size:16.400px;letter-spacing:.3px">Multi-line</div>
<div class="t" style="left:1140px;top:709.500px;font-size:15.700px">Single line</div>
<!-- reset -->
<svg style="left:1120px;top:771px" width="18" height="18" viewBox="0 0 18 18"><path d="M3.500 5.500A6.500 6.500 0 1 1 2.500 10" fill="none" stroke="#117865" stroke-width="1.300"/><path d="M3 1.500v4.500h4.500" fill="none" stroke="#117865" stroke-width="1.300"/></svg>
<div class="t" style="left:1145px;top:773.200px;font-size:15.700px">Reset to default</div>
<!-- collapsed rows -->
<svg style="left:1121px;top:827px" width="10" height="18" viewBox="0 0 10 18"><path d="M1.500 1l7 8-7 8" fill="none" stroke="#a19f9d" stroke-width="1.400"/></svg>
<div class="t sb" style="left:1140px;top:826.500px;font-size:16.200px;color:#a19f9d">Total labels</div>
<div class="abs" style="left:1361px;top:825px;width:43px;height:21px;background:#fff;border:1px solid #c8c6c4;border-radius:10px"></div>
<div class="abs" style="left:1367px;top:830.500px;width:10px;height:10px;background:#a19f9d;border-radius:50%"></div>
<div class="t" style="left:1380px;top:830px;font-size:12.500px;color:#a19f9d">Off</div>
<div class="abs" style="left:1107px;top:861px;width:300px;height:1px;background:#e1dfdd"></div>
<svg style="left:1121px;top:880px" width="10" height="18" viewBox="0 0 10 18"><path d="M1.500 1l7 8-7 8" fill="none" stroke="#252423" stroke-width="1.700"/></svg>
<div class="t sb" style="left:1140px;top:881px;font-size:16.200px">Plot area background</div>
<div class="abs" style="left:1107px;top:916px;width:300px;height:1px;background:#e1dfdd"></div>
<div class="abs" style="left:1407px;top:822px;width:7px;height:110px;background:#8a8886;border-radius:4px"></div>
<!-- BUILD PANE -->
<div class="abs" style="left:1415px;top:144px;width:1px;height:782px;background:#dddbd9"></div>
<div class="pane" style="left:1416px;width:240px"></div>
<div class="ph" style="left:1427px">Build</div>
<svg style="left:1597px;top:168px" width="22" height="6" viewBox="0 0 22 6"><circle cx="2.500" cy="3" r="1.300" fill="#252423"/><circle cx="10.500" cy="3" r="1.300" fill="#252423"/><circle cx="18.500" cy="3" r="1.300" fill="#252423"/></svg>
<svg style="left:1629px;top:161.500px" width="16" height="17" viewBox="0 0 16 17"><path d="M1 1l7 7.500-7 7.500M8 1l7 7.500-7 7.500" fill="none" stroke="#252423" stroke-width="1.300"/></svg>
<div class="t" style="left:1426.500px;top:199px;font-size:15.700px">Suggestions</div>
<div class="abs" style="left:1427px;top:222px;width:219px;height:285px;background:#fff;border:1px solid #c8c6c4;border-radius:2px"></div>
<div class="abs" style="left:1433px;top:227px;width:32px;height:32px;border:1px solid #605e5c;background:#fff"></div>
<!--BUILDICONS-->
<div class="t" style="left:1426px;top:522px;font-size:15.500px">Y-axis</div>
<div class="abs" style="left:1426px;top:545px;width:220px;height:97px;border:1px dashed #8a8886;border-radius:3px"></div>
<div class="abs" style="left:1433px;top:552px;width:206px;height:38px;border:1px solid #8a8886;border-radius:3px;background:#f3f2f1"></div>
<div class="t" style="left:1441px;top:564px;font-size:15.500px">Country</div>
<svg style="left:1572px;top:563px" width="60" height="18" viewBox="0 0 60 18"><path d="M1 1l15 15M16 1L1 16" stroke="#252423" stroke-width="1.500" fill="none"/><path d="M28.500 -1v20" stroke="#8a8886" stroke-width="1" fill="none"/><path d="M45 1.500l7 7.500-7 7.500" stroke="#252423" stroke-width="1.400" fill="none"/></svg>
<div class="abs" style="left:1433px;top:597px;width:206px;height:38px;border:1px solid #8a8886;border-radius:3px;background:#fff"></div>
<div class="t c" style="left:1536.500px;top:608px;font-size:16.300px;font-weight:400;-webkit-text-stroke:.5px #252423">+Add data</div>
<div class="t" style="left:1426px;top:657px;font-size:15.500px">X-axis</div>
<div class="abs" style="left:1426px;top:680px;width:220px;height:97px;border:1px dashed #8a8886;border-radius:3px"></div>
<div class="abs" style="left:1433px;top:686px;width:206px;height:39px;border:1px solid #8a8886;border-radius:3px;background:#f3f2f1"></div>
<div class="t" style="left:1441px;top:699px;font-size:15.200px">Sum of GDP (B...</div>
<svg style="left:1572px;top:697px" width="60" height="18" viewBox="0 0 60 18"><path d="M1 1l15 15M16 1L1 16" stroke="#252423" stroke-width="1.500" fill="none"/><path d="M28.500 -1v20" stroke="#8a8886" stroke-width="1" fill="none"/><path d="M45 1.500l7 7.500-7 7.500" stroke="#252423" stroke-width="1.400" fill="none"/></svg>
<div class="abs" style="left:1433px;top:731px;width:206px;height:39px;border:1px solid #8a8886;border-radius:3px;background:#fff"></div>
<div class="t c" style="left:1536.500px;top:742px;font-size:16.300px;font-weight:400;-webkit-text-stroke:.5px #252423">+Add data</div>
<div class="t" style="left:1426px;top:792px;font-size:15.500px">Legend</div>
<div class="abs" style="left:1426px;top:814px;width:220px;height:52px;border:1px dashed #8a8886;border-radius:3px"></div>
<div class="abs" style="left:1433px;top:821px;width:206px;height:39px;border:1px solid #8a8886;border-radius:3px;background:#fff"></div>
<div class="t c" style="left:1536.500px;top:832px;font-size:16.300px;font-weight:400;-webkit-text-stroke:.5px #252423">+Add data</div>
<div class="t" style="left:1426px;top:881px;font-size:15.700px">Small multiples</div>
<div class="abs" style="left:1426px;top:904px;width:220px;height:52px;border:1px dashed #8a8886;border-radius:3px"></div>
<div class="abs" style="left:1433px;top:910px;width:206px;height:39px;border:1px solid #8a8886;border-radius:3px;background:#fff"></div>
<div class="t c" style="left:1536.500px;top:921px;font-size:16.300px;font-weight:400;-webkit-text-stroke:.5px #252423">+Add data</div>
<div class="abs" style="left:1649px;top:194px;width:6px;height:720px;background:#8a8886;border-radius:3px"></div>
<svg style="left:1436.9px;top:229.9px" width="25" height="25" viewBox="0 0 24 24"><rect x="1.4" y="3" width="5.6" height="6.5" fill="#fff" stroke="#8a8886" stroke-width="1.1"/><rect x="7" y="3" width="9.5" height="6.5" fill="#83beec" stroke="#0f6cbd" stroke-width="1.1"/><rect x="1.4" y="14" width="8.8" height="6.5" fill="#fff" stroke="#8a8886" stroke-width="1.1"/><rect x="10.2" y="14" width="11" height="6.5" fill="#c8c6c4" stroke="#8a8886" stroke-width="1.1"/><path d="M.7 0v23.300h23.300" fill="none" stroke="#3b3a39" stroke-width="1.4"/></svg>
<svg style="left:1471.3px;top:229.9px" width="25" height="25" viewBox="0 0 24 24"><rect x="4" y="16" width="6" height="7" fill="#fff" stroke="#3b3a39" stroke-width="1.1"/><rect x="4" y="7.5" width="6" height="8.5" fill="#83beec" stroke="#0f6cbd" stroke-width="1.1"/><rect x="15" y="13.5" width="6" height="9.5" fill="#fff" stroke="#3b3a39" stroke-width="1.1"/><rect x="15" y="3" width="6" height="10.5" fill="#c8c6c4" stroke="#8a8886" stroke-width="1.1"/><path d="M.7 0v23.300h23.300" fill="none" stroke="#3b3a39" stroke-width="1.4"/></svg>
<svg style="left:1506.2px;top:229.9px" width="25" height="25" viewBox="0 0 24 24"><rect x="1.4" y="1" width="21.6" height="4.5" fill="#83beec" stroke="#0f6cbd" stroke-width="1.1"/><rect x="1.4" y="6" width="12.6" height="4.5" fill="#fff" stroke="#3b3a39" stroke-width="1.1"/><rect x="1.4" y="12" width="9.6" height="4" fill="#c8c6c4" stroke="#8a8886" stroke-width="1.1"/><rect x="1.4" y="17" width="16.6" height="4.5" fill="#fff" stroke="#3b3a39" stroke-width="1.1"/><path d="M.7 0v23.300h23.300" fill="none" stroke="#3b3a39" stroke-width="1.4"/></svg>
<svg style="left:1540.8px;top:229.9px" width="25" height="25" viewBox="0 0 24 24"><rect x="2.5" y="1" width="4.5" height="22" fill="#83beec" stroke="#0f6cbd" stroke-width="1.1"/><rect x="7.5" y="10" width="4.5" height="13" fill="#fff" stroke="#3b3a39" stroke-width="1.1"/><rect x="13" y="14" width="4.5" height="9" fill="#c8c6c4" stroke="#8a8886" stroke-width="1.1"/><rect x="18" y="7" width="4.5" height="16" fill="#fff" stroke="#3b3a39" stroke-width="1.1"/><path d="M.7 0v23.300h23.300" fill="none" stroke="#3b3a39" stroke-width="1.4"/></svg>
<svg style="left:1575.7px;top:229.9px" width="25" height="25" viewBox="0 0 24 24"><rect x="1.4" y="3" width="5.1" height="6.5" fill="#fff" stroke="#3b3a39" stroke-width="1.1"/><rect x="6.5" y="3" width="15" height="6.5" fill="#83beec" stroke="#0f6cbd" stroke-width="1.1"/><rect x="1.4" y="14" width="12.6" height="6.5" fill="#fff" stroke="#3b3a39" stroke-width="1.1"/><rect x="14" y="14" width="7.5" height="6.5" fill="#c8c6c4" stroke="#8a8886" stroke-width="1.1"/><path d="M.7 0v23.300h23.300" fill="none" stroke="#3b3a39" stroke-width="1.4"/></svg>
<svg style="left:1610.1px;top:229.9px" width="25" height="25" viewBox="0 0 24 24"><rect x="4" y="18.5" width="6" height="4.5" fill="#fff" stroke="#3b3a39" stroke-width="1.1"/><rect x="4" y="3" width="6" height="15.5" fill="#83beec" stroke="#0f6cbd" stroke-width="1.1"/><rect x="15" y="10" width="6" height="13" fill="#fff" stroke="#3b3a39" stroke-width="1.1"/><rect x="15" y="3" width="6" height="7" fill="#c8c6c4" stroke="#8a8886" stroke-width="1.1"/><path d="M.7 0v23.300h23.300" fill="none" stroke="#3b3a39" stroke-width="1.4"/></svg>
<svg style="left:1436.9px;top:265.3px" width="25" height="25" viewBox="0 0 24 24"><path d="M1 19L14.500 4.500L23 13" fill="none" stroke="#0f6cbd" stroke-width="1.2"/><path d="M1 13L8 5l7 7.500L23 4" fill="none" stroke="#3b3a39" stroke-width="1.2"/><path d="M.7 0v23.300h23.300" fill="none" stroke="#3b3a39" stroke-width="1.4"/></svg>
<svg style="left:1471.3px;top:265.3px" width="25" height="25" viewBox="0 0 24 24"><path d="M14 9.500L18.500 .500l5 10.500v12.500z" fill="#c8c6c4" stroke="#8a8886" stroke-width="1"/><path d="M.500 14L8 1.500l6 8" fill="#fafafa" stroke="#3b3a39" stroke-width="1.2"/><path d="M.600 15l6 5L13 9.500l10.500 14H.600z" fill="#83beec" stroke="#0f6cbd" stroke-width="1.2"/></svg>
<svg style="left:1506.2px;top:265.3px" width="25" height="25" viewBox="0 0 24 24"><path d="M1.500 5L8 11l8.500-8 3.500 3.500h3.500v12L16 11.500 8 19.500 1.500 13.500z" fill="#83beec" stroke="#0f6cbd" stroke-width="1.2"/><path d="M.7 0v23.300h23.300" fill="none" stroke="#3b3a39" stroke-width="1.4"/></svg>
<svg style="left:1540.8px;top:265.3px" width="25" height="25" viewBox="0 0 24 24"><path d="M1.500 2.500h22V18L16 10.500 7.500 19l-6-7z" fill="#83beec" stroke="#0f6cbd" stroke-width="1.2"/><path d="M1.500 2.500h22" fill="none" stroke="#0f6cbd" stroke-width="1.8"/><path d="M.7 0v23.300h23.300" fill="none" stroke="#3b3a39" stroke-width="1.4"/></svg>
<svg style="left:1575.7px;top:265.3px" width="25" height="25" viewBox="0 0 24 24"><rect x="4" y="17.5" width="6" height="5.5" fill="#fff" stroke="#3b3a39" stroke-width="1.1"/><rect x="4" y="3" width="6" height="14.5" fill="#83beec" stroke="#0f6cbd" stroke-width="1.1"/><rect x="15" y="9" width="6" height="14" fill="#fff" stroke="#3b3a39" stroke-width="1.1"/><rect x="15" y="3" width="6" height="6" fill="#c8c6c4" stroke="#8a8886" stroke-width="1.1"/><path d="M1 22l6.500-8.500 7 5L23.500 9" fill="none" stroke="#3b3a39" stroke-width="1.3"/><path d="M.7 0v23.300h23.300" fill="none" stroke="#3b3a39" stroke-width="1.4"/></svg>
<svg style="left:1610.1px;top:265.3px" width="25" height="25" viewBox="0 0 24 24"><rect x="4.5" y="10" width="5.5" height="13" fill="#83beec" stroke="#0f6cbd" stroke-width="1.1"/><rect x="11" y="1.5" width="5" height="21.5" fill="#fff" stroke="#3b3a39" stroke-width="1.1"/><rect x="16.5" y="6" width="5.5" height="17" fill="#c8c6c4" stroke="#8a8886" stroke-width="1.1"/><path d="M1 22l7-9.500 7.500 6L23.500 9" fill="none" stroke="#3b3a39" stroke-width="1.3"/><path d="M.7 0v23.300h23.300" fill="none" stroke="#3b3a39" stroke-width="1.4"/></svg>
<svg style="left:1436.9px;top:299.8px" width="25" height="25" viewBox="0 0 24 24"><path d="M3.500 5.500C8 6 9 9 12.500 9s5-3.500 10.500-5v4c-5 1-6 5-10.500 5S8 10 3.500 9.500z" fill="#a19f9d" stroke="#8a8886" stroke-width="0.8"/><rect x="3.5" y="14.5" width="19.5" height="4" fill="#f0a030" stroke="#d47b1e" stroke-width="0.9"/><path d="M3.500 10.500c4 0 5 5.500 9 5.500s5.500-5.500 10.500-6v3.500c-5 1-6 6-10.500 6s-5-5-9-5.500z" fill="#83beec" stroke="#0f6cbd" stroke-width="1.1"/><path d="M.7 0v23.300h23.300" fill="none" stroke="#3b3a39" stroke-width="1.4"/></svg>
<svg style="left:1471.3px;top:299.8px" width="25" height="25" viewBox="0 0 24 24"><rect x="2.5" y="7" width="4.5" height="16" fill="#fff" stroke="#3b3a39" stroke-width="1.1"/><rect x="8.5" y="7" width="4.5" height="7" fill="#a19f9d" stroke="#8a8886" stroke-width="1.1"/><rect x="13" y="1.5" width="2.6" height="12.5" fill="#0f6cbd" stroke="#0f6cbd" stroke-width="1.1"/><rect x="17" y="1.5" width="5" height="21.5" fill="#fff" stroke="#3b3a39" stroke-width="1.1"/><path d="M.7 0v23.300h23.300" fill="none" stroke="#3b3a39" stroke-width="1.4"/></svg>
<svg style="left:1506.2px;top:299.8px" width="25" height="25" viewBox="0 0 24 24"><rect x="0.9" y="1.6" width="22.7" height="7.8" fill="#83beec" stroke="#0f6cbd" stroke-width="1.3"/><rect x="2.9" y="9.4" width="18.2" height="6.4" fill="#83beec" stroke="#0f6cbd" stroke-width="1.3"/><rect x="7" y="15.8" width="10.5" height="6" fill="#83beec" stroke="#0f6cbd" stroke-width="1.3"/></svg>
<svg style="left:1540.8px;top:299.8px" width="25" height="25" viewBox="0 0 24 24"><rect x="17" y="1.5" width="4.5" height="4.5" fill="#3b3a39" stroke="#3b3a39" stroke-width="0"/><rect x="4.5" y="6" width="4" height="4" fill="#83beec" stroke="#5ba3dc" stroke-width="0.8"/><rect x="10.5" y="9.5" width="4" height="4" fill="#83beec" stroke="#5ba3dc" stroke-width="0.8"/><rect x="17" y="14.5" width="4" height="4" fill="#83beec" stroke="#5ba3dc" stroke-width="0.8"/><rect x="4" y="16" width="4.5" height="4.5" fill="#3b3a39" stroke="#3b3a39" stroke-width="0"/><path d="M.7 0v23.300h23.300" fill="none" stroke="#3b3a39" stroke-width="1.4"/></svg>
<svg style="left:1575.7px;top:299.8px" width="25" height="25" viewBox="0 0 24 24"><circle cx="12" cy="12" r="11.300" fill="#fafafa" stroke="#3b3a39" stroke-width="1.300"/><path d="M12 12V.700A11.300 11.300 0 0 1 20.200 19.800z" fill="#83beec" stroke="#0f6cbd" stroke-width="1.3"/></svg>
<svg style="left:1610.1px;top:299.8px" width="25" height="25" viewBox="0 0 24 24"><circle cx="12" cy="12" r="11.200" fill="#fafafa" stroke="#8a8886" stroke-width="1.200"/><path d="M12 .800A11.200 11.200 0 1 1 .800 12h5.700A5.500 5.500 0 1 0 12 6.500z" fill="#83beec" stroke="#0f6cbd" stroke-width="1.3"/><circle cx="12" cy="12" r="5.500" fill="#fff" stroke="#8a8886" stroke-width="1.200"/><path d="M12 6.500A5.500 5.500 0 1 1 6.500 12" fill="none" stroke="#0f6cbd" stroke-width="1.3"/></svg>
<svg style="left:1436.9px;top:334.9px" width="25" height="25" viewBox="0 0 24 24"><rect x="0.6" y="0.6" width="11.4" height="11.4" fill="#83beec" stroke="#0f6cbd" stroke-width="1.3"/><rect x="0.6" y="12" width="11.4" height="11.4" fill="#83beec" stroke="#0f6cbd" stroke-width="1.3"/><rect x="12" y="0.6" width="11.4" height="8" fill="#fff" stroke="#3b3a39" stroke-width="1.3"/><rect x="12" y="8.6" width="3.8" height="14.8" fill="#fff" stroke="#3b3a39" stroke-width="1.3"/><rect x="15.8" y="8.6" width="7.6" height="7.4" fill="#fff" stroke="#3b3a39" stroke-width="1.3"/><rect x="15.8" y="16" width="7.6" height="7.4" fill="#fff" stroke="#3b3a39" stroke-width="1.3"/></svg>
<svg style="left:1471.3px;top:334.9px" width="25" height="25" viewBox="0 0 24 24"><circle cx="12.500" cy="11" r="7.300" fill="#fff" stroke="#3b3a39" stroke-width="1.300"/><path d="M9 6.500c2-1.500 4-2 5.500-1.500l-1 2.500-2 .500-.500 2.500-2.500 1c-.500-2-.500-3.500.500-5zM15.500 8l2.500-.500c1 1.500 1.200 3 .800 4.500l-2.300.500-1.500-2zM10.500 13l3.500-.500 1.500 2-1 3.500c-1.500.300-3 0-4-1z" fill="#2f8f46" stroke="none" stroke-width="0"/><path d="M11.500 .800C5.500 1.500 2.500 6 2.800 11.500 3.200 17 8 21 13.500 20.500c2-.200 4-1 5.500-2.500" fill="none" stroke="#3b3a39" stroke-width="1.4"/><path d="M12.500 20.500v3M4.500 23.500h15.500" fill="none" stroke="#3b3a39" stroke-width="1.4"/></svg>
<svg style="left:1506.2px;top:334.9px" width="25" height="25" viewBox="0 0 24 24"><path d="M10.700 4.500H15.200L18.100 2H23.400V10.900H10.700z" fill="#c8c6c4" stroke="#3b3a39" stroke-width="1.2"/><path d="M1.100 10.900H12.500L11.500 16.500L11 22.500L8.200 21.100L7 19.500L4.700 19.300L3.500 17L1.100 14.400z" fill="#c8c6c4" stroke="#3b3a39" stroke-width="1.2"/><path d="M1.100 1.700H7.500L10.700 4.500V10.900H1.100L2.900 8z" fill="#83beec" stroke="#0f6cbd" stroke-width="1.2"/><path d="M12.500 10.900H23.400V14.400Q23 18 17.400 19.700L16 20.800 14.500 20.300 11 22.500 11.500 16.500z" fill="#83beec" stroke="#0f6cbd" stroke-width="1.2"/></svg>
<svg style="left:1540.8px;top:334.9px" width="25" height="25" viewBox="0 0 24 24"><path d="M10.700 4.500H15.200L18.100 2H23.400V10.900H10.700z" fill="#fafafa" stroke="#3b3a39" stroke-width="1.2"/><path d="M1.100 10.900H12.500L11.500 16.500L11 22.500L8.200 21.100L7 19.500L4.700 19.300L3.500 17L1.100 14.400z" fill="#fafafa" stroke="#3b3a39" stroke-width="1.2"/><path d="M1.100 1.700H7.500L10.700 4.500V10.900H1.100L2.900 8z" fill="#fafafa" stroke="#2a86d1" stroke-width="1.2"/><path d="M12.500 10.900H23.400V14.400Q23 18 17.400 19.700L16 20.800 14.500 20.300 11 22.500 11.500 16.500z" fill="#fafafa" stroke="#2a86d1" stroke-width="1.2"/></svg>
<svg style="left:1575.7px;top:334.9px" width="25" height="25" viewBox="0 0 24 24"><path d="M16 -.800L2.600 21.100l11.300-4.200z" fill="#3a9fd3" stroke="none" stroke-width="0"/><path d="M16 -.800l6.300 25.800-8.400-8.100z" fill="#45b0e0" stroke="none" stroke-width="0"/><path d="M13.900 16.900L22.300 25l-2.600-10.500z" fill="#0f78d4" stroke="none" stroke-width="0"/></svg>
<svg style="left:1610.1px;top:334.9px" width="25" height="25" viewBox="0 0 24 24"><path d="M.800 17.500A11.300 11.300 0 0 1 12 6.200l0 4.800A6.500 6.500 0 0 0 5.600 17.500z" fill="#fafafa" stroke="#3b3a39" stroke-width="1.3"/><path d="M8 7A11.300 11.300 0 0 1 23.400 17.500h-4.800A6.500 6.500 0 0 0 10 11.500z" fill="#83beec" stroke="#0f6cbd" stroke-width="1.3"/><path d="M17.500 10.500L12 17" fill="none" stroke="#3b3a39" stroke-width="1.2"/><circle cx="12.200" cy="16.800" r="1.700" fill="#3b3a39"/></svg>
<svg style="left:1436.9px;top:369.3px" width="25" height="25" viewBox="0 0 24 24"><rect x="0.7" y="3.7" width="22.8" height="17.6" fill="#fafafa" stroke="#3b3a39" stroke-width="1.4"/><path d="M3 19h18" fill="none" stroke="#8a8886" stroke-width="1.1"/><text x="12" y="16.500" text-anchor="middle" font-family="Liberation Sans,Arial,sans-serif" font-size="11.500" fill="#2a86d1" textLength="17" lengthAdjust="spacingAndGlyphs">123</text></svg>
<svg style="left:1471.3px;top:369.3px" width="25" height="25" viewBox="0 0 24 24"><rect x="0.7" y="0.7" width="22.8" height="22.8" fill="#fafafa" stroke="#3b3a39" stroke-width="1.4"/><path d="M5 3.500v17" fill="none" stroke="#8a8886" stroke-width="1.1"/><path d="M7.500 6.800h12.500M7.500 15.300h12.500" fill="none" stroke="#0f6cbd" stroke-width="2.4"/><path d="M7.500 10h6M7.500 18.500h6" fill="none" stroke="#8a8886" stroke-width="1"/></svg>
<svg style="left:1506.2px;top:369.3px" width="25" height="25" viewBox="0 0 24 24"><rect x="0.7" y="3.2" width="22.8" height="18.3" fill="#fafafa" stroke="#3b3a39" stroke-width="1.3"/><path d="M3.500 14L7.500 7l4 7z" fill="#7fc68a" stroke="#2f8f46" stroke-width="1.1"/><path d="M12.800 6.500h8L16.800 13.500z" fill="#f08a8a" stroke="#d13438" stroke-width="1.1"/><path d="M3 18h18" fill="none" stroke="#8a8886" stroke-width="1"/></svg>
<svg style="left:1540.8px;top:369.3px" width="25" height="25" viewBox="0 0 24 24"><rect x="0.7" y="0.7" width="22.8" height="22.8" fill="#fafafa" stroke="#3b3a39" stroke-width="1.4"/><path d="M1.400 3h21.500" fill="none" stroke="#a19f9d" stroke-width="3"/><rect x="4" y="8.5" width="4.2" height="4.2" fill="#c8c6c4" stroke="#8a8886" stroke-width="1"/><rect x="4" y="15" width="4.2" height="4.2" fill="#c8c6c4" stroke="#8a8886" stroke-width="1"/><path d="M12 12.700h13.500L20.500 18.500v6.500h-4v-6.500z" fill="#fafafa" stroke="#3b3a39" stroke-width="1.4" stroke-linejoin="miter"/></svg>
<svg style="left:1575.7px;top:369.3px" width="25" height="25" viewBox="0 0 24 24"><rect x="0.7" y="0.7" width="22.8" height="22.8" fill="#fafafa" stroke="#3b3a39" stroke-width="1.4"/><path d="M1.400 3h21.500" fill="none" stroke="#a19f9d" stroke-width="3"/><path d="M8.200 5v18M15.800 5v18M1.400 11.500h21.500M1.400 17.500h21.500M1.400 5.200h21.500" fill="none" stroke="#8a8886" stroke-width="1.2"/></svg>
<svg style="left:1610.1px;top:369.3px" width="25" height="25" viewBox="0 0 24 24"><rect x="0.7" y="0.7" width="22.8" height="22.8" fill="#fafafa" stroke="#3b3a39" stroke-width="1.4"/><path d="M1.400 3h21.500" fill="none" stroke="#a19f9d" stroke-width="3"/><rect x="15.8" y="5.2" width="7" height="12.3" fill="#83beec" stroke="#0f6cbd" stroke-width="0"/><rect x="1.4" y="17.5" width="21.4" height="5.3" fill="#83beec" stroke="#0f6cbd" stroke-width="0"/><path d="M8.200 5v12.500M15.800 5v12.500M1.400 11.500h14.400M1.400 5.200h21.500" fill="none" stroke="#8a8886" stroke-width="1.2"/><path d="M8.200 17.500v5.500M15.800 17.500v5.500M15.800 11.500h7M1.400 17.500h21.500M15.800 5.200v12.300" fill="none" stroke="#0f6cbd" stroke-width="1.2"/><rect x="0.7" y="0.7" width="22.8" height="22.8" fill="none" stroke="#3b3a39" stroke-width="1.4"/></svg>
<svg style="left:1436.9px;top:404.1px" width="25" height="25" viewBox="0 0 24 24"><text x="11.500" y="19.500" text-anchor="middle" font-family="Liberation Sans,Arial,sans-serif" font-size="19.500" font-weight="700" fill="#2a7fc4">R</text></svg>
<svg style="left:1471.3px;top:404.1px" width="25" height="25" viewBox="0 0 24 24"><text x="12" y="17.500" text-anchor="middle" font-family="Liberation Sans,Arial,sans-serif" font-size="22" font-weight="700" fill="#2a86d1" textLength="25" lengthAdjust="spacingAndGlyphs">Py</text></svg>
<svg style="left:1506.2px;top:404.1px" width="25" height="25" viewBox="0 0 24 24"><path d="M1 4.500h16" fill="none" stroke="#0f6cbd" stroke-width="1.2"/><circle cx="19.800" cy="4.500" r="3" fill="#83beec" stroke="#0f6cbd" stroke-width="1.100"/><path d="M1 11h12M1 16.500h7" fill="none" stroke="#8a8886" stroke-width="1.2"/><circle cx="14.500" cy="11" r="1.700" fill="#c8c6c4" stroke="#8a8886" stroke-width="1"/><circle cx="9.500" cy="16.500" r="1.700" fill="#c8c6c4" stroke="#8a8886" stroke-width="1"/><path d="M.7 0v23.300h23.300" fill="none" stroke="#3b3a39" stroke-width="1.4"/></svg>
<svg style="left:1540.8px;top:404.1px" width="25" height="25" viewBox="0 0 24 24"><path d="M9.500 11.200h5M12.200 3v17M12.200 3h2.500M12.200 20h2.500" fill="none" stroke="#3b3a39" stroke-width="1.3"/><rect x="0.6" y="8.5" width="9" height="5.5" fill="#83beec" stroke="#0f6cbd" stroke-width="1.2"/><rect x="14.8" y="0.6" width="8.6" height="5" fill="#83beec" stroke="#0f6cbd" stroke-width="1.2"/><rect x="14.8" y="8.6" width="8.6" height="5.2" fill="#83beec" stroke="#0f6cbd" stroke-width="1.2"/><rect x="14.8" y="17" width="8.6" height="5.5" fill="#83beec" stroke="#0f6cbd" stroke-width="1.2"/></svg>
<svg style="left:1575.7px;top:404.1px" width="25" height="25" viewBox="0 0 24 24"><path d="M.800 1.700h22.800v15.800H10.500L4.500 23.500v-6H.800z" fill="#fafafa" stroke="#0f6cbd" stroke-width="1.4" stroke-linejoin="miter"/></svg>
<svg style="left:1610.1px;top:404.1px" width="25" height="25" viewBox="0 0 24 24"><path d="M4.500 6V.800h10l5.700 5.700v16.800H4.500V12.500" fill="#fafafa" stroke="#3b3a39" stroke-width="1.3"/><path d="M14.500 .800v5.700h5.700" fill="none" stroke="#3b3a39" stroke-width="1.2"/><circle cx="4.500" cy="9.300" r="2.500" fill="#83beec" stroke="#0f6cbd" stroke-width="1.100"/><path d="M9 11.500h8.500M10 15.500h6" fill="none" stroke="#2a86d1" stroke-width="1.1"/></svg>
<svg style="left:1436.9px;top:438.5px" width="25" height="25" viewBox="0 0 24 24"><path d="M6.500 3H1.500c0 5 2 8 6 8.500M17.500 3h5c0 5-2 8-6 8.500" fill="none" stroke="#3b3a39" stroke-width="1.4"/><path d="M6.500 2v6c0 5 3 7 4.500 8.500-1.500 2-2.500 3-3.500 4.500h9c-1-1.500-2-2.500-3.500-4.500 1.500-1.500 4.500-3.500 4.500-8.500V2" fill="#fafafa" stroke="#3b3a39" stroke-width="1.4"/><rect x="6" y="0.6" width="12" height="3" fill="#83beec" stroke="#0f6cbd" stroke-width="1.2" rx="1"/><rect x="6" y="20.5" width="12" height="3" fill="#83beec" stroke="#0f6cbd" stroke-width="1.2" rx="1"/></svg>
<svg style="left:1471.3px;top:438.5px" width="25" height="25" viewBox="0 0 24 24"><path d="M2.500 .700h10.500l6.500 6.500v16H2.500z" fill="#fafafa" stroke="#3b3a39" stroke-width="1.4"/><path d="M13 .700v6.500h6.500" fill="none" stroke="#3b3a39" stroke-width="1.2"/><rect x="6" y="14.5" width="2.6" height="6.5" fill="#3b3a39" stroke="#3b3a39" stroke-width="0"/><rect x="10.3" y="17.5" width="2.6" height="3.5" fill="#3b3a39" stroke="#3b3a39" stroke-width="0"/><rect x="14.6" y="11.5" width="2.6" height="9.5" fill="#3b3a39" stroke="#3b3a39" stroke-width="0"/></svg>
<svg style="left:1506.2px;top:438.5px" width="25" height="25" viewBox="0 0 24 24"><rect x="2.7" y="4" width="21.3" height="16" fill="#fafafa" stroke="#3b3a39" stroke-width="1.4"/><path d="M5 17.800h17" fill="none" stroke="#8a8886" stroke-width="1"/><text x="14.500" y="15.500" text-anchor="middle" font-family="Liberation Sans,Arial,sans-serif" font-size="11" fill="#2a86d1" textLength="16" lengthAdjust="spacingAndGlyphs">123</text><path d="M4.500 -1.500h6.500L7 4.500h4L-.500 14.500 3.500 7H0z" fill="#f3b04c" stroke="#d47b1e" stroke-width="0.9" stroke-linejoin="round"/></svg>
<svg style="left:1540.8px;top:438.5px" width="25" height="25" viewBox="0 0 24 24"><rect x="13.5" y="1.5" width="8" height="8" fill="#fafafa" stroke="#8a8886" stroke-width="1.2"/><rect x="5" y="6.5" width="7" height="6.5" fill="#0f6cbd" stroke="#0f6cbd" stroke-width="0"/><rect x="2.5" y="13.5" width="8" height="8" fill="#fafafa" stroke="#8a8886" stroke-width="1.2"/><rect x="13.5" y="13.5" width="4" height="8" fill="#fafafa" stroke="#8a8886" stroke-width="1.2"/><path d="M12.500 13h12.500l-4.700 5.500v6.500h-3.600v-6.500z" fill="#fafafa" stroke="#3b3a39" stroke-width="1.4"/><path d="M4.500 -1.500h6.500L7 4.500h4L-.500 14.500 3.500 7H0z" fill="#f3b04c" stroke="#d47b1e" stroke-width="0.9" stroke-linejoin="round"/></svg>
<svg style="left:1575.7px;top:438.5px" width="25" height="25" viewBox="0 0 24 24"><path d="M8 1.500h17v11M14 23.500H2.500V14" fill="none" stroke="#3b3a39" stroke-width="1.3"/><text x="13" y="17.500" text-anchor="middle" font-family="Liberation Sans,Arial,sans-serif" font-size="17" fill="#2a86d1">A</text><path d="M12.500 13h12.500l-4.700 5.500v6.500h-3.600v-6.500z" fill="#fafafa" stroke="#3b3a39" stroke-width="1.4"/><path d="M4.500 -1.500h6.500L7 4.500h4L-.500 14.500 3.500 7H0z" fill="#f3b04c" stroke="#d47b1e" stroke-width="0.9" stroke-linejoin="round"/></svg>
<svg style="left:1610.1px;top:438.5px" width="25" height="25" viewBox="0 0 24 24"><path d="M8 1.500h16.500v11M14 23.500H2.500V16" fill="none" stroke="#3b3a39" stroke-width="1.3"/><path d="M10 7.500h12" fill="none" stroke="#8a8886" stroke-width="1"/><rect x="6" y="14" width="2.6" height="2.6" fill="#fff" stroke="#8a8886" stroke-width="1"/><path d="M9.500 15.300h3" fill="none" stroke="#8a8886" stroke-width="1"/><path d="M12.500 13h12.500l-4.700 5.500v6.500h-3.600v-6.500z" fill="#fafafa" stroke="#3b3a39" stroke-width="1.4"/><path d="M4.500 -1.500h6.500L7 4.500h4L-.500 14.500 3.500 7H0z" fill="#f3b04c" stroke="#d47b1e" stroke-width="0.9" stroke-linejoin="round"/></svg>
<svg style="left:1436.9px;top:473.2px" width="25" height="25" viewBox="0 0 24 24"><path d="M8.200 1.600h15.200v9.500M1 14v9.700h14" fill="none" stroke="#1a6fb8" stroke-width="2"/><path d="M21.500 5.500l-4.500 .300-1-1.500-3 1.500v3l-2.500 .500-1 3-2.500 1.500v3.500L3.500 22.500h10.500l1.500-4.500 2-2.500 1.500-3.500 3-.500z" fill="#7db7e6" stroke="#3d8fd0" stroke-width="0.7"/><path d="M3 3.200H21.500V6l-4 .200-1.200-1.300-2.800 1.300v3l-2.500 .700-1 2.800-2.500 1.700v3.400L3 21.800z" fill="#fafafa" stroke="none" stroke-width="0"/><path d="M-.800 1.500Q-.800 0 .700 0h4.800q1.500 0 1.500 1.500V10L3.100 13.800-.800 10z" fill="#e06c0a" stroke="none" stroke-width="0"/><circle cx="3.100" cy="5" r="1.500" fill="#fff"/><circle cx="20.500" cy="20.800" r="3.400" fill="#e06c0a"/><circle cx="23" cy="14.500" r="2.100" fill="#e06c0a"/></svg>
<svg style="left:1471.3px;top:473.2px" width="25" height="25" viewBox="0 0 24 24"><path d="M9.450 7L13.600 2.300L23.300 12.700L13.600 23.200L9.450 17.500M9.450 7L18.300 17.200M18.300 7.800L9.450 17.500M11.300 4.600L9.500 2.400L.700 12.700L9.500 23.100L11.300 20.900" fill="none" stroke="#9b2fa3" stroke-width="1.3" stroke-linejoin="round" stroke-linecap="round"/></svg>
<svg style="left:1506.2px;top:473.2px" width="25" height="25" viewBox="0 0 24 24"><path d="M1.800 3.200H15.300L23.300 11.800L15.800 21.100H1.800Q.400 20.500 1.500 19.300L7.800 11.800L1.500 5Q.400 3.800 1.800 3.200z" fill="#fafafa" stroke="#0f78d4" stroke-width="1.4" stroke-linejoin="round"/><path d="M15 3.600L1.800 20.600M20.300 8.900L8.900 20.900" fill="none" stroke="#0f78d4" stroke-width="1.3"/></svg>
<svg style="left:1540.8px;top:473.2px" width="25" height="25" viewBox="0 0 24 24"><circle cx="4" cy="10" r="1.300" fill="#3b3a39"/><circle cx="12" cy="10" r="1.300" fill="#3b3a39"/><circle cx="20" cy="10" r="1.300" fill="#3b3a39"/></svg>
<!-- DATA PANE -->
<div class="abs" style="left:1656px;top:144px;width:1px;height:782px;background:#dddbd9"></div>
<div class="pane" style="left:1657px;width:246px"></div>
<div class="ph" style="left:1668px">Data</div>
<svg style="left:1839px;top:168px" width="22" height="6" viewBox="0 0 22 6"><circle cx="2.500" cy="3" r="1.300" fill="#252423"/><circle cx="10.500" cy="3" r="1.300" fill="#252423"/><circle cx="18.500" cy="3" r="1.300" fill="#252423"/></svg>
<svg style="left:1870.700px;top:161.500px" width="16" height="17" viewBox="0 0 16 17"><path d="M1 1l7 7.500-7 7.500M8 1l7 7.500-7 7.500" fill="none" stroke="#252423" stroke-width="1.300"/></svg>
<div class="abs" style="left:1664px;top:206.500px;width:228px;height:31.500px;background:#fff;border:1px solid #d2d0ce;border-bottom-color:#8a8886;border-radius:4px"></div>
<svg style="left:1678px;top:212px" width="22" height="22" viewBox="0 0 22 22"><circle cx="8.500" cy="8.500" r="6.500" fill="none" stroke="#605e5c" stroke-width="1.500"/><path d="M13.500 13.500L20 20" stroke="#605e5c" stroke-width="1.500"/></svg>
<div class="t" style="left:1708px;top:215.500px;font-size:17.800px;color:#605e5c">Search</div>
<div class="abs" style="left:1882px;top:249px;width:11px;height:111px;background:#8a8886"></div>
<div class="abs" style="left:1898.500px;top:144px;width:5px;height:782px;background:#faf9f8"></div>
<div class="abs" style="left:1898.500px;top:145px;width:5px;height:121.500px;background:#e9e7e5;border-left:1.500px solid #8a8886;border-bottom:1.500px solid #8a8886"></div>
<div class="abs" style="left:1898.500px;top:185.500px;width:5px;height:1.500px;background:#8a8886"></div>
<div class="abs" style="left:1898.500px;top:228.500px;width:5px;height:1.500px;background:#8a8886"></div>

<svg style="left:1677px;top:258.0px" width="10" height="16" viewBox="0 0 10 16"><path d="M1.500 1l7 7-7 7" fill="none" stroke="#252423" stroke-width="1.200"/></svg>
<svg style="left:1696.500px;top:258.0px" width="17" height="16" viewBox="0 0 17 16"><rect x=".700" y=".700" width="15.300" height="14.300" rx="3" fill="none" stroke="#252423" stroke-width="1.400"/><path d="M.700 4.300h15.300M.700 11.400h15.300M4.600 .700v14.300M11.900 .700v14.300" stroke="#252423" stroke-width="1.300" fill="none"/></svg>
<div class="t" style="left:1720px;top:259.7px;font-size:15.500px">Ashishdata</div>
<svg style="left:1677px;top:290.0px" width="10" height="16" viewBox="0 0 10 16"><path d="M1.500 1l7 7-7 7" fill="none" stroke="#252423" stroke-width="1.200"/></svg>
<svg style="left:1696.500px;top:290.0px" width="17" height="16" viewBox="0 0 17 16"><rect x=".700" y=".700" width="15.300" height="14.300" rx="3" fill="none" stroke="#252423" stroke-width="1.400"/><path d="M.700 4.300h15.300M.700 11.400h15.300M4.600 .700v14.300M11.900 .700v14.300" stroke="#252423" stroke-width="1.300" fill="none"/></svg>
<div class="t" style="left:1720px;top:291.7px;font-size:15.500px">Branch details</div>
<svg style="left:1677px;top:322.0px" width="10" height="16" viewBox="0 0 10 16"><path d="M1.500 1l7 7-7 7" fill="none" stroke="#252423" stroke-width="1.200"/></svg>
<svg style="left:1696.500px;top:322.0px" width="20" height="19" viewBox="0 0 20 19"><path d="M8.500 15H3.700a3 3 0 0 1-3-3V3.700a3 3 0 0 1 3-3H13a3 3 0 0 1 3 3V5M.700 4.300h15.300M.700 11.400h8M4.600 .700v14.300M11.900 .700v4.500" fill="none" stroke="#252423" stroke-width="1.400"/><rect x="9.800" y="5.900" width="8.600" height="12.300" rx="1.800" fill="#f3f2f1" stroke="#252423" stroke-width="1.400"/><path d="M10.500 8.600h7.200" stroke="#252423" stroke-width="2.200"/><path d="M10.500 11.900h7.200M10.500 14.900h7.200M14.100 9.500v8.500" stroke="#252423" stroke-width="1.100"/></svg>
<div class="t" style="left:1720px;top:323.7px;font-size:15.500px">Calculated Table</div>
<svg style="left:1677px;top:354.0px" width="10" height="16" viewBox="0 0 10 16"><path d="M1.500 1l7 7-7 7" fill="none" stroke="#252423" stroke-width="1.200"/></svg>
<svg style="left:1696.500px;top:354.0px" width="20" height="19" viewBox="0 0 20 19"><path d="M8.500 15H3.700a3 3 0 0 1-3-3V3.700a3 3 0 0 1 3-3H13a3 3 0 0 1 3 3V5M.700 4.300h15.300M.700 11.400h8M4.600 .700v14.300M11.900 .700v4.500" fill="none" stroke="#252423" stroke-width="1.400"/><rect x="9.800" y="5.900" width="8.600" height="12.300" rx="1.800" fill="#f3f2f1" stroke="#252423" stroke-width="1.400"/><path d="M10.500 8.600h7.200" stroke="#252423" stroke-width="2.200"/><path d="M10.500 11.900h7.200M10.500 14.900h7.200M14.100 9.500v8.500" stroke="#252423" stroke-width="1.100"/></svg>
<div class="t" style="left:1720px;top:355.7px;font-size:15.500px">Class</div>
<svg style="left:1674.500px;top:388.500px" width="17" height="10" viewBox="0 0 17 10"><path d="M1 1.500l7.500 7.500 7.500-7.500" fill="none" stroke="#252423" stroke-width="1.300"/></svg>
<svg style="left:1696.500px;top:386.0px" width="17" height="16" viewBox="0 0 17 16"><rect x=".700" y=".700" width="15.300" height="14.300" rx="3" fill="none" stroke="#252423" stroke-width="1.400"/><path d="M.700 4.300h15.300M.700 11.400h15.300M4.600 .700v14.300M11.900 .700v14.300" stroke="#252423" stroke-width="1.300" fill="none"/></svg>
<div class="t" style="left:1720px;top:387.7px;font-size:15.500px">Countries</div>
<svg style="left:1705px;top:394.700px" width="16" height="16" viewBox="0 0 15 15"><circle cx="7.500" cy="7.500" r="7.500" fill="#117865"/><path d="M4 7.700l2.500 2.500L11 5.500" fill="none" stroke="#fff" stroke-width="1.400"/></svg>
<div class="abs" style="left:1716px;top:419px;width:16px;height:16px;background:#f3f2f1;border:1px solid #a19f9d;border-radius:3px"></div>
<svg style="left:1744px;top:418px" width="14" height="17" viewBox="0 0 14 17"><path d="M13 3.500V1H1.500l6.500 7.500-6.500 7.500H13v-2.500" fill="none" stroke="#252423" stroke-width="1.300" stroke-linejoin="miter"/></svg>
<div class="t" style="left:1767px;top:419.7px;font-size:15.500px">Area (sq km)</div>
<div class="abs" style="left:1716px;top:451px;width:16px;height:16px;background:#117865;border-radius:2px"></div>
<svg style="left:1716px;top:451px" width="16" height="16" viewBox="0 0 16 16"><path d="M3 8.200l3.300 3.300L13 4.800" fill="none" stroke="#fff" stroke-width="1.500"/></svg>
<div class="t" style="left:1767px;top:451.7px;font-size:15.500px">Country</div>
<div class="abs" style="left:1716px;top:483px;width:16px;height:16px;background:#117865;border-radius:2px"></div>
<svg style="left:1716px;top:483px" width="16" height="16" viewBox="0 0 16 16"><path d="M3 8.200l3.300 3.300L13 4.800" fill="none" stroke="#fff" stroke-width="1.500"/></svg>
<svg style="left:1744px;top:482px" width="14" height="17" viewBox="0 0 14 17"><path d="M13 3.500V1H1.500l6.500 7.500-6.500 7.500H13v-2.500" fill="none" stroke="#252423" stroke-width="1.300" stroke-linejoin="miter"/></svg>
<div class="t" style="left:1767px;top:483.7px;font-size:15.500px">GDP (Billion U...</div>
<div class="abs" style="left:1716px;top:515px;width:16px;height:16px;background:#f3f2f1;border:1px solid #a19f9d;border-radius:3px"></div>
<svg style="left:1744px;top:514px" width="14" height="17" viewBox="0 0 14 17"><path d="M13 3.500V1H1.500l6.500 7.500-6.500 7.500H13v-2.500" fill="none" stroke="#252423" stroke-width="1.300" stroke-linejoin="miter"/></svg>
<div class="t" style="left:1767px;top:515.7px;font-size:15.500px">Literacy Rate (...</div>
<div class="abs" style="left:1716px;top:547px;width:16px;height:16px;background:#f3f2f1;border:1px solid #a19f9d;border-radius:3px"></div>
<svg style="left:1744px;top:546px" width="14" height="17" viewBox="0 0 14 17"><path d="M13 3.500V1H1.500l6.500 7.500-6.500 7.500H13v-2.500" fill="none" stroke="#252423" stroke-width="1.300" stroke-linejoin="miter"/></svg>
<div class="t" style="left:1767px;top:547.7px;font-size:15.500px">Population (M...</div>
<div class="abs" style="left:1716px;top:579px;width:16px;height:16px;background:#f3f2f1;border:1px solid #a19f9d;border-radius:3px"></div>
<svg style="left:1744px;top:578px" width="14" height="17" viewBox="0 0 14 17"><path d="M13 3.500V1H1.500l6.500 7.500-6.500 7.500H13v-2.500" fill="none" stroke="#252423" stroke-width="1.300" stroke-linejoin="miter"/></svg>
<div class="t" style="left:1767px;top:579.7px;font-size:15.500px">Year</div>
<svg style="left:1677px;top:610.0px" width="10" height="16" viewBox="0 0 10 16"><path d="M1.500 1l7 7-7 7" fill="none" stroke="#252423" stroke-width="1.200"/></svg>
<svg style="left:1696.500px;top:610.0px" width="20" height="19" viewBox="0 0 20 19"><path d="M8.500 15H3.700a3 3 0 0 1-3-3V3.700a3 3 0 0 1 3-3H13a3 3 0 0 1 3 3V5M.700 4.300h15.300M.700 11.400h8M4.600 .700v14.300M11.900 .700v4.500" fill="none" stroke="#252423" stroke-width="1.400"/><rect x="9.800" y="5.900" width="8.600" height="12.300" rx="1.800" fill="#f3f2f1" stroke="#252423" stroke-width="1.400"/><path d="M10.500 8.600h7.200" stroke="#252423" stroke-width="2.200"/><path d="M10.500 11.900h7.200M10.500 14.900h7.200M14.100 9.500v8.500" stroke="#252423" stroke-width="1.100"/></svg>
<div class="t" style="left:1720px;top:611.7px;font-size:15.500px">Countries Average T...</div>
<svg style="left:1677px;top:642.0px" width="10" height="16" viewBox="0 0 10 16"><path d="M1.500 1l7 7-7 7" fill="none" stroke="#252423" stroke-width="1.200"/></svg>
<svg style="left:1696.500px;top:642.0px" width="17" height="16" viewBox="0 0 17 16"><rect x=".700" y=".700" width="15.300" height="14.300" rx="3" fill="none" stroke="#252423" stroke-width="1.400"/><path d="M.700 4.300h15.300M.700 11.400h15.300M4.600 .700v14.300M11.900 .700v14.300" stroke="#252423" stroke-width="1.300" fill="none"/></svg>
<div class="t" style="left:1720px;top:643.7px;font-size:15.500px">Countrylist</div>
<svg style="left:1677px;top:675.0px" width="10" height="16" viewBox="0 0 10 16"><path d="M1.500 1l7 7-7 7" fill="none" stroke="#252423" stroke-width="1.200"/></svg>
<svg style="left:1696.500px;top:675.0px" width="17" height="16" viewBox="0 0 17 16"><rect x=".700" y=".700" width="15.300" height="14.300" rx="3" fill="none" stroke="#252423" stroke-width="1.400"/><path d="M.700 4.300h15.300M.700 11.400h15.300M4.600 .700v14.300M11.900 .700v14.300" stroke="#252423" stroke-width="1.300" fill="none"/></svg>
<div class="t" style="left:1720px;top:676.7px;font-size:15.500px">Customers</div>
<svg style="left:1677px;top:707.0px" width="10" height="16" viewBox="0 0 10 16"><path d="M1.500 1l7 7-7 7" fill="none" stroke="#252423" stroke-width="1.200"/></svg>
<svg style="left:1696.500px;top:707.0px" width="17" height="16" viewBox="0 0 17 16"><rect x=".700" y=".700" width="15.300" height="14.300" rx="3" fill="none" stroke="#252423" stroke-width="1.400"/><path d="M.700 4.300h15.300M.700 11.400h15.300M4.600 .700v14.300M11.900 .700v14.300" stroke="#252423" stroke-width="1.300" fill="none"/></svg>
<div class="t" style="left:1720px;top:708.7px;font-size:15.500px">CustomersData</div>
<svg style="left:1677px;top:739.0px" width="10" height="16" viewBox="0 0 10 16"><path d="M1.500 1l7 7-7 7" fill="none" stroke="#252423" stroke-width="1.200"/></svg>
<svg style="left:1696.500px;top:739.0px" width="17" height="16" viewBox="0 0 17 16"><rect x=".700" y=".700" width="15.300" height="14.300" rx="3" fill="none" stroke="#252423" stroke-width="1.400"/><path d="M.700 4.300h15.300M.700 11.400h15.300M4.600 .700v14.300M11.900 .700v14.300" stroke="#252423" stroke-width="1.300" fill="none"/></svg>
<div class="t" style="left:1720px;top:740.7px;font-size:15.500px">Data1</div>
<svg style="left:1677px;top:771.0px" width="10" height="16" viewBox="0 0 10 16"><path d="M1.500 1l7 7-7 7" fill="none" stroke="#252423" stroke-width="1.200"/></svg>
<svg style="left:1696.500px;top:771.0px" width="17" height="16" viewBox="0 0 17 16"><rect x=".700" y=".700" width="15.300" height="14.300" rx="3" fill="none" stroke="#252423" stroke-width="1.400"/><path d="M.700 4.300h15.300M.700 11.400h15.300M4.600 .700v14.300M11.900 .700v14.300" stroke="#252423" stroke-width="1.300" fill="none"/></svg>
<div class="t" style="left:1720px;top:772.7px;font-size:15.500px">Data2</div>
<svg style="left:1677px;top:803.0px" width="10" height="16" viewBox="0 0 10 16"><path d="M1.500 1l7 7-7 7" fill="none" stroke="#252423" stroke-width="1.200"/></svg>
<svg style="left:1696.500px;top:803.0px" width="20" height="19" viewBox="0 0 20 19"><path d="M8.500 15H3.700a3 3 0 0 1-3-3V3.700a3 3 0 0 1 3-3H13a3 3 0 0 1 3 3V5M.700 4.300h15.300M.700 11.400h8M4.600 .700v14.300M11.900 .700v4.500" fill="none" stroke="#252423" stroke-width="1.400"/><rect x="9.800" y="5.900" width="8.600" height="12.300" rx="1.800" fill="#f3f2f1" stroke="#252423" stroke-width="1.400"/><path d="M10.500 8.600h7.200" stroke="#252423" stroke-width="2.200"/><path d="M10.500 11.900h7.200M10.500 14.900h7.200M14.100 9.500v8.500" stroke="#252423" stroke-width="1.100"/></svg>
<div class="t" style="left:1720px;top:804.7px;font-size:15.500px;letter-spacing:-0.7px">DATESBETWEEN Table</div>
<svg style="left:1677px;top:835.0px" width="10" height="16" viewBox="0 0 10 16"><path d="M1.500 1l7 7-7 7" fill="none" stroke="#252423" stroke-width="1.200"/></svg>
<svg style="left:1696.500px;top:835.0px" width="20" height="19" viewBox="0 0 20 19"><path d="M8.500 15H3.700a3 3 0 0 1-3-3V3.700a3 3 0 0 1 3-3H13a3 3 0 0 1 3 3V5M.700 4.300h15.300M.700 11.400h8M4.600 .700v14.300M11.900 .700v4.500" fill="none" stroke="#252423" stroke-width="1.400"/><rect x="9.800" y="5.900" width="8.600" height="12.300" rx="1.800" fill="#f3f2f1" stroke="#252423" stroke-width="1.400"/><path d="M10.500 8.600h7.200" stroke="#252423" stroke-width="2.200"/><path d="M10.500 11.900h7.200M10.500 14.900h7.200M14.100 9.500v8.500" stroke="#252423" stroke-width="1.100"/></svg>
<div class="t" style="left:1720px;top:836.7px;font-size:15.500px;letter-spacing:-0.5px">DATESINPERIOD Table</div>
<svg style="left:1677px;top:867.0px" width="10" height="16" viewBox="0 0 10 16"><path d="M1.500 1l7 7-7 7" fill="none" stroke="#252423" stroke-width="1.200"/></svg>
<svg style="left:1696.500px;top:867.0px" width="20" height="19" viewBox="0 0 20 19"><path d="M8.500 15H3.700a3 3 0 0 1-3-3V3.700a3 3 0 0 1 3-3H13a3 3 0 0 1 3 3V5M.700 4.300h15.300M.700 11.400h8M4.600 .700v14.300M11.900 .700v4.500" fill="none" stroke="#252423" stroke-width="1.400"/><rect x="9.800" y="5.900" width="8.600" height="12.300" rx="1.800" fill="#f3f2f1" stroke="#252423" stroke-width="1.400"/><path d="M10.500 8.600h7.200" stroke="#252423" stroke-width="2.200"/><path d="M10.500 11.900h7.200M10.500 14.900h7.200M14.100 9.500v8.500" stroke="#252423" stroke-width="1.100"/></svg>
<div class="t" style="left:1720px;top:868.7px;font-size:15.500px;letter-spacing:-0.33px">DATESMTD Table</div>
<svg style="left:1677px;top:899.0px" width="10" height="16" viewBox="0 0 10 16"><path d="M1.500 1l7 7-7 7" fill="none" stroke="#252423" stroke-width="1.200"/></svg>
<svg style="left:1696.500px;top:899.0px" width="17" height="16" viewBox="0 0 17 16"><rect x=".700" y=".700" width="15.300" height="14.300" rx="3" fill="none" stroke="#252423" stroke-width="1.400"/><path d="M.700 4.300h15.300M.700 11.400h15.300M4.600 .700v14.300M11.900 .700v14.300" stroke="#252423" stroke-width="1.300" fill="none"/></svg>
<div class="t" style="left:1720px;top:900.7px;font-size:15.500px">df</div>
</body>
</html>
